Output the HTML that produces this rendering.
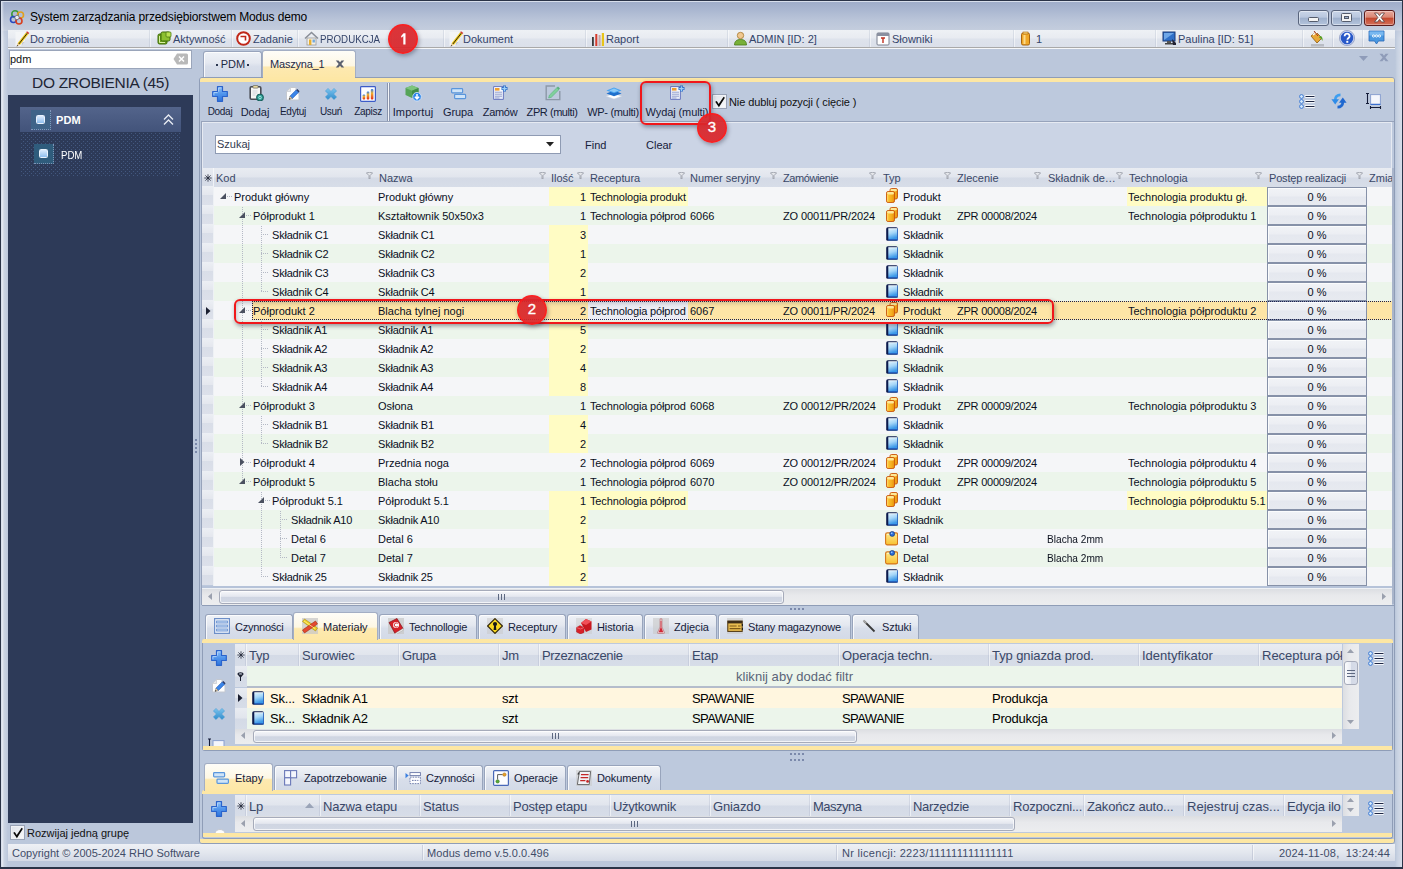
<!DOCTYPE html>
<html><head><meta charset="utf-8"><title>Modus</title><style>
html,body{margin:0;padding:0;}
body{width:1403px;height:869px;overflow:hidden;position:relative;font-family:"Liberation Sans",sans-serif;font-size:11px;background:#bbc7db;}
div,svg{position:absolute;}
.t{white-space:nowrap;color:#000;}
.t13{white-space:nowrap;color:#000;font-size:13px;}
</style></head><body>
<div style="left:0px;top:0px;width:1403px;height:869px;background:#bbc7db;"></div>
<div style="left:0px;top:0px;width:1403px;height:31px;background:linear-gradient(#9dabc8 0,#a9b6d0 30%,#bac5d9 65%,#c5cede 100%);"></div>
<div style="left:2px;top:2px;width:2px;height:865px;background:linear-gradient(90deg,rgba(255,255,255,.45),rgba(255,255,255,0));"></div>
<div style="left:2px;top:24px;width:6px;height:843px;background:linear-gradient(90deg,rgba(255,255,255,.36),rgba(255,255,255,0));-webkit-mask-image:linear-gradient(transparent 0,#000 14px);mask-image:linear-gradient(transparent 0,#000 14px);"></div>
<div style="left:1395px;top:24px;width:7px;height:843px;background:linear-gradient(90deg,rgba(255,255,255,0) 0,rgba(255,255,255,.18) 30%,rgba(255,255,255,.42) 100%);-webkit-mask-image:linear-gradient(transparent 0,#000 14px);mask-image:linear-gradient(transparent 0,#000 14px);"></div>
<div style="left:0px;top:0px;width:1403px;height:869px;border:1px solid #2a3347;box-sizing:border-box;border-bottom:2px solid #2a3347;"></div>
<div style="left:1px;top:1px;width:1401px;height:1px;background:#d8dfec;"></div>
<div style="left:1px;top:1px;width:1px;height:866px;background:#d8dfec;"></div>
<svg style="left:9px;top:9px" width="17" height="17" viewBox="0 0 17 17"><circle cx="6" cy="5" r="3.2" fill="none" stroke="#3a9a3a" stroke-width="1.6"/><circle cx="11.5" cy="6" r="3" fill="none" stroke="#e0a020" stroke-width="1.6"/><circle cx="4.5" cy="10.5" r="3" fill="none" stroke="#2848c0" stroke-width="1.6"/><circle cx="10" cy="12" r="3" fill="none" stroke="#d84020" stroke-width="1.6"/><circle cx="8" cy="8.5" r="2.2" fill="#e8ecf4" stroke="#667" stroke-width=".8"/></svg>
<div class="t" style="left:30px;top:8px;height:18px;line-height:18px;font-size:12px;letter-spacing:-0.15px;color:#000;">System zarządzania przedsiębiorstwem Modus demo</div>
<div style="left:1298px;top:10px;width:31px;height:16px;border:1px solid #59647c;border-radius:3px;box-sizing:border-box;background:linear-gradient(#c9d5e8 0,#b9c7de 45%,#9eb0cc 50%,#b4c4dc 100%);box-shadow:inset 0 0 0 1px rgba(255,255,255,.45);"></div>
<div style="left:1331px;top:10px;width:31px;height:16px;border:1px solid #59647c;border-radius:3px;box-sizing:border-box;background:linear-gradient(#c9d5e8 0,#b9c7de 45%,#9eb0cc 50%,#b4c4dc 100%);box-shadow:inset 0 0 0 1px rgba(255,255,255,.45);"></div>
<div style="left:1364px;top:10px;width:31px;height:16px;border:1px solid #5a1a1a;border-radius:3px;box-sizing:border-box;background:linear-gradient(#e9a99c 0,#d98673 45%,#c4472d 50%,#d4705a 100%);box-shadow:inset 0 0 0 1px rgba(255,255,255,.35);"></div>
<div style="left:1308px;top:17px;width:11px;height:5px;background:#f4f4f4;border:1px solid #555c6c;border-radius:1.5px;box-sizing:border-box;"></div>
<div style="left:1341px;top:13px;width:11px;height:9px;background:#f4f4f4;border:1px solid #555c6c;border-radius:1.5px;box-sizing:border-box;"></div>
<div style="left:1344px;top:16px;width:5px;height:3px;background:#9eb0cc;border:1px solid #555c6c;box-sizing:border-box;"></div>
<svg style="left:1373px;top:12px" width="13" height="11" viewBox="0 0 13 11"><path d="M1.5 1h3l2 2.6 2-2.6h3l-3.4 4.5 3.4 4.5h-3l-2-2.6-2 2.6h-3l3.4-4.5z" fill="#f6f6f6" stroke="#5a4040" stroke-width=".8"/></svg>
<div style="left:8px;top:30px;width:1387px;height:17px;background:linear-gradient(#eef1f5 0,#e8ebf1 48%,#dee3ec 52%,#dbe0ea 100%);"></div>
<div style="left:8px;top:47px;width:1387px;height:1px;background:#a9a9a9;"></div>
<div style="left:8px;top:48px;width:1387px;height:1px;background:#f6f7f9;"></div>
<div style="left:150px;top:30px;width:1px;height:17px;background:rgba(255,255,255,.5);"></div>
<div style="left:149px;top:30px;width:1px;height:17px;background:rgba(160,170,190,.25);"></div>
<div style="left:232px;top:30px;width:1px;height:17px;background:rgba(255,255,255,.5);"></div>
<div style="left:231px;top:30px;width:1px;height:17px;background:rgba(160,170,190,.25);"></div>
<div style="left:298px;top:30px;width:1px;height:17px;background:rgba(255,255,255,.5);"></div>
<div style="left:297px;top:30px;width:1px;height:17px;background:rgba(160,170,190,.25);"></div>
<div style="left:392px;top:30px;width:1px;height:17px;background:rgba(255,255,255,.5);"></div>
<div style="left:391px;top:30px;width:1px;height:17px;background:rgba(160,170,190,.25);"></div>
<div style="left:444px;top:30px;width:1px;height:17px;background:rgba(255,255,255,.5);"></div>
<div style="left:443px;top:30px;width:1px;height:17px;background:rgba(160,170,190,.25);"></div>
<div style="left:586px;top:30px;width:1px;height:17px;background:rgba(255,255,255,.5);"></div>
<div style="left:585px;top:30px;width:1px;height:17px;background:rgba(160,170,190,.25);"></div>
<div style="left:728px;top:30px;width:1px;height:17px;background:rgba(255,255,255,.5);"></div>
<div style="left:727px;top:30px;width:1px;height:17px;background:rgba(160,170,190,.25);"></div>
<div style="left:870px;top:30px;width:1px;height:17px;background:rgba(255,255,255,.5);"></div>
<div style="left:869px;top:30px;width:1px;height:17px;background:rgba(160,170,190,.25);"></div>
<div style="left:1014px;top:30px;width:1px;height:17px;background:rgba(255,255,255,.5);"></div>
<div style="left:1013px;top:30px;width:1px;height:17px;background:rgba(160,170,190,.25);"></div>
<div style="left:1156px;top:30px;width:1px;height:17px;background:rgba(255,255,255,.5);"></div>
<div style="left:1155px;top:30px;width:1px;height:17px;background:rgba(160,170,190,.25);"></div>
<div style="left:1303px;top:30px;width:1px;height:17px;background:rgba(255,255,255,.5);"></div>
<div style="left:1302px;top:30px;width:1px;height:17px;background:rgba(160,170,190,.25);"></div>
<div style="left:1333px;top:30px;width:1px;height:17px;background:rgba(255,255,255,.5);"></div>
<div style="left:1332px;top:30px;width:1px;height:17px;background:rgba(160,170,190,.25);"></div>
<div style="left:1363px;top:30px;width:1px;height:17px;background:rgba(255,255,255,.5);"></div>
<div style="left:1362px;top:30px;width:1px;height:17px;background:rgba(160,170,190,.25);"></div>
<svg style="left:15px;top:31px" width="15" height="16" viewBox="0 0 15 16"><path d="M0.500 1h9.500v9.500L6.500 15H0.500z" fill="#f4f5f7" opacity=".9"/><path d="M10 10.500L6.500 15l.500-3.500z" fill="#c4c8d0"/><path d="M2.600 12.300L11.200 1.300l2.300 1.800L4.900 14.100z" fill="#f0c818"/><path d="M3.700 13.200L12.300 2.200" stroke="#2a2410" stroke-width="1"/><path d="M11.200 1.300l.800-1 2.300 1.800-.800 1z" fill="#d83030"/><path d="M2.600 12.300l2.300 1.800-3.200 1.300z" fill="#e8c890"/><path d="M1.700 15.400l.400-1.400 1 .800z" fill="#222"/></svg>
<div class="t" style="left:30px;top:30px;height:18px;line-height:18px;color:#34446a;letter-spacing:-.25px;">Do zrobienia</div>
<svg style="left:157px;top:31px" width="15" height="15" viewBox="0 0 15 15"><rect x="1" y="3" width="9" height="10" rx="1.5" fill="#6ca018" stroke="#3d6a08" stroke-width="1"/><rect x="4" y="1" width="9" height="9" rx="1.5" fill="#8cc030" stroke="#3d6a08" stroke-width="1"/><rect x="9" y="1" width="5" height="5" rx="1" fill="#b8e050" stroke="#4d7a10" stroke-width=".8"/><path d="M2.5 5v6.5H8" fill="none" stroke="#d8f0a0" stroke-width="1"/></svg>
<div class="t" style="left:173px;top:30px;height:18px;line-height:18px;color:#34446a;">Aktywność</div>
<svg style="left:236px;top:31px" width="15" height="15" viewBox="0 0 15 15"><circle cx="7.5" cy="7.5" r="6.3" fill="#fff" stroke="#c02818" stroke-width="2"/><path d="M4.5 5.5h5v4" fill="none" stroke="#c02818" stroke-width="1.6"/></svg>
<div class="t" style="left:253px;top:30px;height:18px;line-height:18px;color:#34446a;">Zadanie</div>
<svg style="left:304px;top:31px" width="15" height="15" viewBox="0 0 15 15"><path d="M1 7.5L7.5 1.5 14 7.5" fill="none" stroke="#8a8f98" stroke-width="1.6"/><rect x="3" y="7" width="9" height="7" fill="#f4f0e6" stroke="#9a9a9a" stroke-width=".8"/><rect x="5" y="8.5" width="2.4" height="5.5" fill="#e8b030"/><rect x="8.5" y="8.5" width="2.4" height="3" fill="#70a8e0"/></svg>
<div class="t" style="left:320px;top:30px;height:18px;line-height:18px;color:#34446a;transform:scaleX(.885);transform-origin:0 50%;">PRODUKCJA</div>
<svg style="left:449px;top:31px" width="15" height="16" viewBox="0 0 15 16"><path d="M0.500 1h9.500v9.500L6.500 15H0.500z" fill="#f4f5f7" opacity=".9"/><path d="M10 10.500L6.500 15l.500-3.500z" fill="#c4c8d0"/><path d="M2.600 12.300L11.200 1.300l2.300 1.800L4.900 14.100z" fill="#f0c818"/><path d="M3.700 13.200L12.300 2.200" stroke="#2a2410" stroke-width="1"/><path d="M11.200 1.300l.800-1 2.300 1.800-.800 1z" fill="#d83030"/><path d="M2.600 12.300l2.300 1.800-3.200 1.300z" fill="#e8c890"/><path d="M1.700 15.400l.400-1.400 1 .800z" fill="#222"/></svg>
<div class="t" style="left:463px;top:30px;height:18px;line-height:18px;color:#34446a;">Dokument</div>
<svg style="left:591px;top:32px" width="15" height="14" viewBox="0 0 15 14"><rect x="1" y="5" width="1.800" height="9" fill="#3a3a3a"/><rect x="4.300" y="2" width="2" height="12" fill="#d83a2a"/><rect x="7.600" y="3" width="2" height="11" fill="#c8a8a8"/><rect x="10.800" y="1" width="2.200" height="13" fill="#e8c418"/></svg>
<div class="t" style="left:606px;top:30px;height:18px;line-height:18px;color:#34446a;">Raport</div>
<svg style="left:733px;top:31px" width="15" height="15" viewBox="0 0 15 15"><circle cx="7.5" cy="4.5" r="3.2" fill="#f0c890" stroke="#a87830" stroke-width=".8"/><path d="M1.5 14c0-4 2.5-5.5 6-5.5s6 1.5 6 5.5z" fill="#78b038" stroke="#4a7a18" stroke-width=".8"/></svg>
<div class="t" style="left:749px;top:30px;height:18px;line-height:18px;color:#34446a;">ADMIN [ID: 2]</div>
<svg style="left:876px;top:31px" width="14" height="15" viewBox="0 0 14 15"><rect x="1" y="2" width="12" height="12" rx="1" fill="#fff" stroke="#7a8090" stroke-width="1"/><rect x="1" y="2" width="12" height="3" fill="#8a90a0"/><path d="M5 7h4M7 7v5" stroke="#c03020" stroke-width="1.4"/></svg>
<div class="t" style="left:892px;top:30px;height:18px;line-height:18px;color:#34446a;">Słowniki</div>
<svg style="left:1020px;top:31px" width="12" height="15" viewBox="0 0 12 15"><rect x="1.5" y="2" width="8" height="12" rx="1.5" fill="#f0a828" stroke="#a86410" stroke-width="1"/><rect x="3" y="1" width="5" height="2" fill="#f8d070" stroke="#a86410" stroke-width=".6"/><rect x="3.5" y="4" width="2" height="9" fill="#fbd98a"/></svg>
<div class="t" style="left:1036px;top:30px;height:18px;line-height:18px;color:#34446a;">1</div>
<svg style="left:1162px;top:31px" width="15" height="15" viewBox="0 0 15 15"><rect x="1" y="1" width="12" height="9" fill="#3070c8" stroke="#1a3a78" stroke-width="1"/><path d="M2 2h10L2 9z" fill="#70a8e8"/><rect x="5" y="10" width="4" height="2" fill="#555"/><rect x="3" y="12" width="8" height="1.5" fill="#444"/><path d="M10 8l4 4v2h-3z" fill="#223"/></svg>
<div class="t" style="left:1178px;top:30px;height:18px;line-height:18px;color:#34446a;">Paulina [ID: 51]</div>
<svg style="left:1308px;top:30px" width="17" height="17" viewBox="0 0 17 17"><path d="M3 6l5-4 6 6-5 5z" fill="#e8a838" stroke="#8a5a10" stroke-width=".8"/><path d="M5 5l4-3" stroke="#fff" stroke-width="1.2"/><path d="M6 1l4 5" stroke="#a03020" stroke-width="1"/><path d="M12 6c2 0 3 2 2.5 5-1-2-2-3-3.5-3.5z" fill="#58a028"/><rect x="3" y="14" width="13" height="2.5" fill="#b8bcc4"/></svg>
<svg style="left:1339px;top:30px" width="16" height="16" viewBox="0 0 16 16"><circle cx="8" cy="8" r="7" fill="#2858c8" stroke="#c8d4f0" stroke-width="1.4"/><circle cx="8" cy="8" r="7.6" fill="none" stroke="#6878a8" stroke-width=".5"/><path d="M5.6 6.2c0-3.4 5-3.4 5 0 0 1.8-2.2 1.8-2.2 3.6" fill="none" stroke="#fff" stroke-width="1.8"/><rect x="7.3" y="10.8" width="2" height="2" fill="#fff"/></svg>
<svg style="left:1368px;top:30px" width="17" height="16" viewBox="0 0 17 16"><path d="M1 1h15v10h-5.5L8.5 14 6.5 11H1z" fill="#4a98e0" stroke="#2868b8" stroke-width=".8"/><path d="M1.5 1.5h14v4h-14z" fill="#78b8f0"/><g fill="none" stroke="#fff" stroke-width=".9"><circle cx="5.5" cy="6" r="1.1"/><circle cx="8.5" cy="6" r="1.1"/><circle cx="11.5" cy="6" r="1.1"/></g></svg>
<div style="left:388px;top:24px;width:30px;height:30px;border-radius:50%;background:radial-gradient(circle closest-side at 50% 50%,rgba(216,38,44,.93) 0,rgba(218,38,42,.93) 84%,rgba(252,24,24,.96) 93%,rgba(252,24,24,.96) 100%);box-shadow:1px 2px 4px rgba(40,40,60,.4);"></div>
<div class="t" style="left:388px;top:23px;height:30px;line-height:30px;width:30px;text-align:center;color:#fff;font-size:15px;-webkit-text-stroke:.35px #fff;"></div>
<svg style="left:401px;top:33px" width="5" height="12" viewBox="0 0 5 12"><path d="M0 3.300L2.500 0.300H4.500V11.500H2.300V3.100L0.700 4.700z" fill="#fff"/></svg>
<div style="left:9px;top:50px;width:183px;height:19px;background:#fff;border:1px solid #9aa5ba;box-sizing:border-box;"></div>
<div class="t" style="left:10px;top:51px;height:16px;line-height:16px;font-size:11px;color:#111;">pdm</div>
<svg style="left:173px;top:53px" width="15" height="12" viewBox="0 0 15 12"><path d="M4 0.5h9.5a1.5 1.5 0 0 1 1.5 1.5v8a1.5 1.5 0 0 1-1.5 1.5H4L0.5 6z" fill="#b9b9b9"/><path d="M6 3.5l5 5M11 3.5l-5 5" stroke="#fff" stroke-width="1.5"/></svg>
<div class="t" style="left:8px;top:71px;height:24px;line-height:24px;width:185px;text-align:center;font-size:15.5px;letter-spacing:-0.3px;color:#1e2535;">DO ZROBIENIA (45)</div>
<div style="left:8px;top:95px;width:185px;height:728px;background:#2d3a58;"></div>
<div style="left:20px;top:107px;width:161px;height:25px;background:linear-gradient(#53648b,#42537a);"></div>
<div style="left:31px;top:110px;width:20px;height:20px;background:#3f6488;border-right:1px dotted rgba(170,180,215,.65);border-bottom:1px dotted rgba(170,180,215,.65);box-sizing:border-box;"></div>
<div style="left:36px;top:115px;width:9px;height:9px;background:linear-gradient(#dcecfc,#8fbfee);border:1px solid #eaf3fd;border-radius:1.5px;box-sizing:border-box;"></div>
<div class="t" style="left:56px;top:108px;height:24px;line-height:24px;font-weight:bold;color:#fff;font-size:11px;letter-spacing:.1px;">PDM</div>
<svg style="left:163px;top:114px" width="11" height="12" viewBox="0 0 11 12"><path d="M1 5.5L5.5 1 10 5.5M1 10.5L5.5 6 10 10.5" fill="none" stroke="#e8ecf4" stroke-width="1.3"/></svg>
<svg style="left:21px;top:133px" width="160" height="44"><defs><pattern id="pdot" width="4" height="4" patternUnits="userSpaceOnUse"><rect x="0" y="2" width="1" height="1" fill="#43587f"/><rect x="2" y="0" width="1" height="1" fill="#43587f"/></pattern></defs><rect width="160" height="44" fill="url(#pdot)"/></svg>
<div style="left:34px;top:144px;width:20px;height:20px;background:#2f5c7c;border-right:1px dotted rgba(170,180,215,.65);border-bottom:1px dotted rgba(170,180,215,.65);box-sizing:border-box;"></div>
<div style="left:39px;top:149px;width:9px;height:9px;background:linear-gradient(#dcecfc,#8fbfee);border:1px solid #eaf3fd;border-radius:1.5px;box-sizing:border-box;"></div>
<div class="t" style="left:61px;top:146px;height:18px;line-height:18px;color:#fff;transform:scaleX(.875);transform-origin:0 50%;">PDM</div>
<div style="left:10px;top:825px;width:15px;height:15px;background:linear-gradient(135deg,#dfe3ea,#f8f9fb);border:1px solid #98a2b6;box-sizing:border-box;box-shadow:inset 0 0 0 1px #f0f2f6;"></div>
<svg style="left:12px;top:827px" width="12" height="12" viewBox="0 0 12 12"><path d="M1.2 5.8l1.6-.9 1.9 3L9.6 0.8l1.3.9-6 9.6z" fill="#0a0a0a"/></svg>
<div class="t" style="left:27px;top:824px;height:18px;line-height:18px;color:#111;">Rozwijaj jedną grupę</div>
<div style="left:195px;top:439px;width:2px;height:2px;background:#7b89ab;"></div>
<div style="left:195px;top:443px;width:2px;height:2px;background:#7b89ab;"></div>
<div style="left:195px;top:447px;width:2px;height:2px;background:#7b89ab;"></div>
<div style="left:195px;top:451px;width:2px;height:2px;background:#7b89ab;"></div>
<div style="left:8px;top:844px;width:1387px;height:17px;background:linear-gradient(#eef0f5 0,#e3e7ee 50%,#d4dae6 100%);"></div>
<div class="t" style="left:12px;top:844px;height:18px;line-height:18px;color:#3f4c68;">Copyright © 2005-2024 RHO Software</div>
<div class="t" style="left:427px;top:844px;height:18px;line-height:18px;color:#3f4c68;letter-spacing:.08px;">Modus demo v.5.0.0.496</div>
<div class="t" style="left:842px;top:844px;height:18px;line-height:18px;color:#3f4c68;letter-spacing:.3px;">Nr licencji: 2223/111111111111111</div>
<div class="t" style="left:1279px;top:844px;height:18px;line-height:18px;color:#3f4c68;white-space:pre;letter-spacing:.17px;">2024-11-08,  13:24:44</div>
<div style="left:422px;top:845px;width:1px;height:15px;background:rgba(170,178,198,.45);"></div>
<div style="left:423px;top:845px;width:1px;height:15px;background:rgba(255,255,255,.55);"></div>
<div style="left:836px;top:845px;width:1px;height:15px;background:rgba(170,178,198,.45);"></div>
<div style="left:837px;top:845px;width:1px;height:15px;background:rgba(255,255,255,.55);"></div>
<div style="left:1252px;top:845px;width:1px;height:15px;background:rgba(170,178,198,.45);"></div>
<div style="left:1253px;top:845px;width:1px;height:15px;background:rgba(255,255,255,.55);"></div>
<svg width="0" height="0" style="left:0;top:0"><defs>
<linearGradient id="gPlus" x1="0" y1="0" x2="0" y2="1"><stop offset="0" stop-color="#8cc0f8"/><stop offset=".5" stop-color="#4f94ec"/><stop offset="1" stop-color="#2f74dc"/></linearGradient>
<linearGradient id="gX" x1="0" y1="0" x2="0" y2="1"><stop offset="0" stop-color="#7cc4ee"/><stop offset="1" stop-color="#2f8ccc"/></linearGradient>
<linearGradient id="gBook" x1="0" y1="0" x2="0.250" y2="1"><stop offset="0" stop-color="#e2f3fd"/><stop offset=".5" stop-color="#a4d6f8"/><stop offset="1" stop-color="#3a98e8"/></linearGradient>
<linearGradient id="gProd" x1="0" y1="0" x2="1" y2="0"><stop offset="0" stop-color="#fcc838"/><stop offset=".6" stop-color="#f6b020"/><stop offset="1" stop-color="#e8900c"/></linearGradient>
<linearGradient id="gBar" x1="0" y1="0" x2="0" y2="1"><stop offset="0" stop-color="#2f7fe8"/><stop offset=".4" stop-color="#f0b030"/><stop offset="1" stop-color="#e02818"/></linearGradient>
<linearGradient id="gDet" x1="0" y1="0" x2="0" y2="1"><stop offset="0" stop-color="#fdea90"/><stop offset="1" stop-color="#f8c030"/></linearGradient>
<linearGradient id="gDoc" x1="0" y1="0" x2="0" y2="1"><stop offset="0" stop-color="#ffffff"/><stop offset="1" stop-color="#e4e9f6"/></linearGradient>
</defs></svg>
<div style="left:203px;top:51px;width:59px;height:27px;border:1px solid #98a4bc;border-bottom:none;border-radius:3px 3px 0 0;box-sizing:border-box;background:linear-gradient(#eff2f7 0,#e4e8f0 42%,#d8deea 56%,#d3dae7 100%);box-shadow:inset 1px 1px 0 rgba(255,255,255,.8);"></div>
<div class="t" style="left:204px;top:53px;height:23px;line-height:23px;width:58px;text-align:center;color:#1e2a44;">PDM</div>
<div style="left:216px;top:64px;width:2px;height:2px;background:#2a3650;"></div>
<div style="left:247px;top:64px;width:2px;height:2px;background:#2a3650;"></div>
<div style="left:262px;top:50px;width:94px;height:29px;border:1px solid #a3aec4;border-bottom:none;border-radius:3px 3px 0 0;box-sizing:border-box;background:linear-gradient(#fefdf8 0,#fdf7e4 52%,#fde9b0 58%,#fde7a6 100%);"></div>
<div class="t" style="left:270px;top:53px;height:23px;line-height:23px;color:#1e2a44;letter-spacing:-.2px;">Maszyna_1</div>
<svg style="left:335px;top:60px" width="10" height="8" viewBox="0 0 10 8.5"><path d="M0.5 0.5h2.9l1.6 2 1.6-2h2.9L6.4 4.2l3.1 3.8H6.6L5 6 3.4 8H0.5l3.1-3.8z" fill="#5a606e"/></svg>
<svg style="left:1359px;top:56px" width="9" height="5" viewBox="0 0 9 5"><path d="M0 0h9L4.5 5z" fill="#8f9cb9"/></svg>
<svg style="left:1379px;top:53px" width="10" height="9" viewBox="0 0 10 8.5"><path d="M0.5 0.5h2.9l1.6 2 1.6-2h2.9L6.4 4.2l3.1 3.8H6.6L5 6 3.4 8H0.5l3.1-3.8z" fill="#8f9cb9"/></svg>
<div style="left:199px;top:77px;width:1196px;height:767px;border:1px solid #8f9db7;box-sizing:border-box;background:#bdc9dd;border-radius:3px 3px 3px 3px;"></div>
<div style="left:200px;top:78px;width:1194px;height:4px;background:#fde7a4;border-radius:2px 2px 0 0;"></div>
<div style="left:200px;top:839px;width:1194px;height:4px;background:#fde7a4;border-radius:0 0 2px 2px;"></div>
<div style="left:263px;top:77px;width:92px;height:2px;background:#fde7a6;"></div>
<div style="left:201px;top:82px;width:1193px;height:39px;background:#bdc9dd;"></div>
<svg style="left:212px;top:86px" width="16" height="16" viewBox="0 0 16 16"><path d="M5.5 0.7h5v4.8h4.8v5h-4.8v4.8h-5v-4.8H0.7v-5h4.8z" fill="url(#gPlus)" stroke="#2a63cc" stroke-width="1.2" stroke-linejoin="round"/><path d="M6.6 5.6V1.9h2.8M1.9 9.4V6.6h3.7" fill="none" stroke="#b4d6fb" stroke-width=".9"/></svg>
<div class="t" style="left:180px;top:104px;height:16px;line-height:16px;width:80px;text-align:center;color:#16213a;font-size:10px;letter-spacing:-0.3px;">Dodaj</div>
<svg style="left:249px;top:85px" width="15" height="16" viewBox="0 0 15 16"><rect x="1.2" y="1.7" width="10.6" height="12.6" rx="1.2" fill="#f6f6f4" stroke="#4a4d55" stroke-width="1.6"/><rect x="4" y="0.5" width="5" height="2.6" rx=".6" fill="#e8d8a0" stroke="#6a6a60" stroke-width=".7"/><path d="M3.5 6h5M3.5 8h5M3.5 10h3" stroke="#c8ccd4" stroke-width=".8"/><circle cx="11" cy="12.5" r="3.3" fill="#2fa098" stroke="#16605c" stroke-width="1.1"/><circle cx="11" cy="12.5" r="1.3" fill="none" stroke="#b8f0ea" stroke-width=".8"/></svg>
<div class="t" style="left:215px;top:104px;height:16px;line-height:16px;width:80px;text-align:center;color:#16213a;font-size:11px;letter-spacing:0px;">Dodaj</div>
<svg style="left:285px;top:86px" width="16" height="15" viewBox="0 0 16 15"><path d="M1.5 5.5l4-4h5.5v4l3 2v6.5H1.5z" fill="#fdfdfd" stroke="#c4c8d0" stroke-width="1"/><path d="M1.5 5.5h4v-4z" fill="#e4e6ea" stroke="#c4c8d0" stroke-width=".7"/><path d="M5 10.2l6.3-6.3 2.3 2.3-6.3 6.3z" fill="#3a86ea" stroke="#1d57b8" stroke-width=".7"/><path d="M11.3 3.9l1-1 2.3 2.3-1 1z" fill="#2a3a68"/><path d="M5 10.2l2.3 2.3-3.3 1z" fill="#f0d8b0" stroke="#555" stroke-width=".4"/><path d="M4 13.5l.5-1.6 1.1 1.1z" fill="#222"/></svg>
<div class="t" style="left:253px;top:104px;height:16px;line-height:16px;width:80px;text-align:center;color:#16213a;font-size:10px;letter-spacing:-0.3px;">Edytuj</div>
<svg style="left:325px;top:88px" width="12" height="12" viewBox="0 0 12 12"><path d="M3 0.400L6 3.400 9 0.400l2.600 2.600L8.600 6l3 3L9 11.600 6 8.600 3 11.600 0.400 9l3-3-3-3z" fill="url(#gX)" stroke="#3f9ad6" stroke-width=".5"/></svg>
<div class="t" style="left:291px;top:104px;height:16px;line-height:16px;width:80px;text-align:center;color:#16213a;font-size:10px;letter-spacing:-0.3px;">Usuń</div>
<svg style="left:360px;top:86px" width="16" height="16" viewBox="0 0 16 16"><rect x="0.6" y="0.6" width="14.8" height="14.8" rx=".8" fill="#fdfdff" stroke="#3c5cc8" stroke-width="1.2"/><rect x="2.6" y="8.5" width="2.6" height="5" rx="1" fill="url(#gBar)"/><rect x="6.7" y="5.5" width="2.6" height="8" rx="1" fill="url(#gBar)"/><rect x="10.8" y="3" width="2.6" height="10.5" rx="1" fill="url(#gBar)"/></svg>
<div class="t" style="left:328px;top:104px;height:16px;line-height:16px;width:80px;text-align:center;color:#16213a;font-size:10px;letter-spacing:-0.3px;">Zapisz</div>
<div style="left:387px;top:83px;width:1px;height:38px;background:#8a95ad;"></div>
<div style="left:388px;top:83px;width:1px;height:38px;background:#f4f6fa;"></div>
<div style="left:389px;top:83px;width:1px;height:38px;background:#8a95ad;"></div>
<svg style="left:405px;top:85px" width="17" height="17" viewBox="0 0 17 17"><path d="M7 0.5l6.5 2.6v7L7 13 0.5 10.1v-7z" fill="#56a458"/><path d="M7 0.5l6.5 2.6L7 5.8 0.5 3.1z" fill="#7cc47c"/><path d="M7 5.8l6.5-2.7v7L7 13z" fill="#3f8c48"/><circle cx="12" cy="11.7" r="4.3" fill="#2f86ea" stroke="#d8e8fc" stroke-width=".8"/><path d="M12 9v4.6M9.9 11.8l2.1 2.1 2.1-2.1" stroke="#fff" stroke-width="1.5" fill="none"/></svg>
<div class="t" style="left:373px;top:104px;height:16px;line-height:16px;width:80px;text-align:center;color:#16213a;font-size:11px;letter-spacing:0.1px;">Importuj</div>
<svg style="left:451px;top:88px" width="16" height="12" viewBox="0 0 16 12"><rect x="0.6" y="0.6" width="11" height="4.2" rx=".8" fill="#cfe4f8" stroke="#5a96dc" stroke-width="1.2"/><rect x="3.6" y="6.4" width="11" height="4.2" rx=".8" fill="#cfe4f8" stroke="#5a96dc" stroke-width="1.2"/></svg>
<div class="t" style="left:418px;top:104px;height:16px;line-height:16px;width:80px;text-align:center;color:#16213a;font-size:11px;letter-spacing:-0.15px;">Grupa</div>
<svg style="left:493px;top:85px" width="16" height="15" viewBox="0 0 16 15"><path d="M0.6 1.6h9.8v12.8H0.6z" fill="url(#gDoc)" stroke="#6a78c0" stroke-width="1"/><rect x="2" y="3" width="4.5" height="2.6" fill="#f0a030"/><path d="M2 7.2h7M2 9.2h7M2 11.2h7M2 13h4.5" stroke="#8a96c8" stroke-width=".9"/><rect x="8" y="0" width="7" height="7" fill="#bcc8dc" opacity=".0"/><path d="M11.5 0.6v6M8.5 3.6h6" stroke="#2f6fc8" stroke-width="3"/><path d="M11.5 1.3v4.6M9.2 3.6h4.6" stroke="#9fd0f8" stroke-width="1.4"/></svg>
<div class="t" style="left:460px;top:104px;height:16px;line-height:16px;width:80px;text-align:center;color:#16213a;font-size:11px;letter-spacing:-0.3px;">Zamów</div>
<svg style="left:545px;top:85px" width="16" height="16" viewBox="0 0 16 16"><path d="M10 1H1.2v13.6h13.6V6" fill="none" stroke="#8c98a8" stroke-width="1.4"/><path d="M4.4 10.2l7.4-7.4 2 2-7.4 7.4-2.8.8z" fill="#7fd09c" stroke="#58b07c" stroke-width=".6"/><path d="M11.8 2.8l1.2-1.2 2 2-1.2 1.2z" fill="#58b07c"/></svg>
<div class="t" style="left:512px;top:104px;height:16px;line-height:16px;width:80px;text-align:center;color:#16213a;font-size:11px;letter-spacing:-0.44px;">ZPR (multi)</div>
<svg style="left:606px;top:87px" width="16" height="13" viewBox="0 0 16 13"><path d="M8 6.5l7.6 2.7L8 12 0.4 9.2z" fill="#fff" stroke="#d0d8e4" stroke-width=".5"/><path d="M8 3.6l7.6 2.8L8 9.2 0.4 6.4z" fill="#1f70cc"/><path d="M8 0.6l7.6 2.8L8 6.2 0.4 3.4z" fill="#4aa4f0"/><path d="M8 1.6l4.8 1.8L8 5.2 3.2 3.4z" fill="#8ccaf8"/></svg>
<div class="t" style="left:573px;top:104px;height:16px;line-height:16px;width:80px;text-align:center;color:#16213a;font-size:11px;letter-spacing:-0.3px;">WP- (multi)</div>
<svg style="left:670px;top:85px" width="16" height="15" viewBox="0 0 16 15"><path d="M0.6 1.6h9.8v12.8H0.6z" fill="url(#gDoc)" stroke="#6a78c0" stroke-width="1"/><rect x="2" y="3" width="4.5" height="2.6" fill="#f0a030"/><path d="M2 7.2h7M2 9.2h7M2 11.2h7M2 13h4.5" stroke="#8a96c8" stroke-width=".9"/><rect x="8" y="0" width="7" height="7" fill="#bcc8dc" opacity=".0"/><path d="M11.5 0.6v6M8.5 3.6h6" stroke="#2f6fc8" stroke-width="3"/><path d="M11.5 1.3v4.6M9.2 3.6h4.6" stroke="#9fd0f8" stroke-width="1.4"/></svg>
<div class="t" style="left:637px;top:104px;height:16px;line-height:16px;width:80px;text-align:center;color:#16213a;font-size:11px;letter-spacing:-0.1px;">Wydaj (multi)</div>
<div style="left:712px;top:94px;width:15px;height:15px;background:linear-gradient(135deg,#dde1e8,#fafbfc);border:1px solid #98a2b6;box-sizing:border-box;box-shadow:inset 0 0 0 1px #f0f2f6;"></div>
<svg style="left:714px;top:96px" width="12" height="12" viewBox="0 0 12 12"><path d="M1.2 5.8l1.6-.9 1.9 3L9.6 0.8l1.3.9-6 9.6z" fill="#0a0a0a"/></svg>
<div class="t" style="left:729px;top:93px;height:18px;line-height:18px;color:#111;letter-spacing:-.1px;">Nie dubluj pozycji ( cięcie )</div>
<svg style="left:1299px;top:94px" width="16" height="15" viewBox="0 0 16 15"><g stroke="#f4f7fb" stroke-width="2.800" stroke-linecap="round"><path d="M7 2.500h8M7 7.500h8M7 12.500h8"/></g><g stroke="#1e2744" stroke-width="1.200"><path d="M6.500 2.500h9M6.500 7.500h9M6.500 12.500h9"/></g><g fill="#d8ecfd" stroke="#2f6fd0" stroke-width=".9"><circle cx="2.500" cy="2.500" r="1.900"/><circle cx="2.500" cy="7.500" r="1.900"/><circle cx="2.500" cy="12.500" r="1.900"/></g></svg>
<svg style="left:1331px;top:93px" width="16" height="16" viewBox="0 0 16 16"><path d="M9.500 1.800C6.200 1.800 4.200 4 4.200 7" stroke="#3f9ff0" stroke-width="2.800" fill="none"/><path d="M0.400 6.200h7.600L4.200 11.600z" fill="#2f8ce8"/><path d="M6.500 14.200c3.300 0 5.300-2.200 5.300-5.200" stroke="#1f68d0" stroke-width="2.800" fill="none"/><path d="M8 9.800h7.600L11.800 4.400z" fill="#1f68d0"/></svg>
<svg style="left:1366px;top:93px" width="16" height="17" viewBox="0 0 16 17"><path d="M1.5 0.5v10M0 0.5h3M0 10.5h3" stroke="#141c38" stroke-width="1.1"/><rect x="4.6" y="1.6" width="9.8" height="9.8" fill="#f4f6fc" stroke="#8aa0d0" stroke-width="1"/><path d="M4.6 11.4h9.8" stroke="#3a6fd0" stroke-width="1.2"/><path d="M4.5 14.5h10M4.5 13v3M14.5 13v3" stroke="#141c38" stroke-width="1.1"/></svg>
<div style="left:201px;top:121px;width:1193px;height:1px;background:#97a3bb;"></div>
<div style="left:202px;top:122px;width:1190px;height:46px;background:#cbd4e5;border-top:1px solid #e6eaf2;border-left:1px solid #e6eaf2;border-right:1px solid #e6eaf2;box-sizing:border-box;"></div>
<div style="left:215px;top:135px;width:346px;height:19px;background:#fff;border:1px solid #8f9bb3;box-sizing:border-box;"></div>
<div class="t" style="left:217px;top:135px;height:18px;line-height:18px;color:#333c50;">Szukaj</div>
<svg style="left:546px;top:142px" width="9" height="5" viewBox="0 0 9 5"><path d="M0 0h8L4 4.5z" fill="#222"/></svg>
<div class="t" style="left:585px;top:136px;height:18px;line-height:18px;color:#16213a;">Find</div>
<div class="t" style="left:646px;top:136px;height:18px;line-height:18px;color:#16213a;">Clear</div>
<div style="left:640px;top:81px;width:71px;height:44px;border:2px solid #f0161a;border-radius:6px;box-sizing:border-box;box-shadow:1px 2px 4px rgba(40,40,60,.45),inset 1px 2px 4px rgba(40,40,60,.25);"></div>
<div style="left:697px;top:113px;width:30px;height:30px;border-radius:50%;background:radial-gradient(circle closest-side at 50% 50%,rgba(216,38,44,.93) 0,rgba(218,38,42,.93) 84%,rgba(252,24,24,.96) 93%,rgba(252,24,24,.96) 100%);box-shadow:1px 2px 4px rgba(40,40,60,.4);"></div>
<div class="t" style="left:697px;top:112px;height:30px;line-height:30px;width:30px;text-align:center;color:#fff;font-size:15px;-webkit-text-stroke:.35px #fff;">3</div>
<div style="left:202px;top:168px;width:1190px;height:19px;background:linear-gradient(#e9ecf2 0,#e1e5ed 48%,#d4dae6 52%,#d7dde8 100%);"></div>
<svg style="left:204px;top:174px" width="8" height="8" viewBox="0 0 8 8"><path d="M4 0.300v7.400M0.300 4h7.400M1.400 1.400l5.200 5.200M6.600 1.400L1.400 6.600" stroke="#1a1f30" stroke-width=".75"/></svg>
<div class="t" style="left:216px;top:169px;height:18px;line-height:18px;color:#3a4868;letter-spacing:0px;">Kod</div>
<svg style="left:366px;top:172px" width="7" height="7" viewBox="0 0 7 7"><path d="M0.400 0.900Q3.500 -0.300 6.600 0.900L4 3.600V7H3V3.600z" fill="#e4e6ea" stroke="#8c919c" stroke-width=".7"/></svg>
<div class="t" style="left:379px;top:169px;height:18px;line-height:18px;color:#3a4868;letter-spacing:0px;">Nazwa</div>
<svg style="left:539px;top:172px" width="7" height="7" viewBox="0 0 7 7"><path d="M0.400 0.900Q3.500 -0.300 6.600 0.900L4 3.600V7H3V3.600z" fill="#e4e6ea" stroke="#8c919c" stroke-width=".7"/></svg>
<div class="t" style="left:551px;top:169px;height:18px;line-height:18px;color:#3a4868;letter-spacing:0px;">Ilość</div>
<svg style="left:577px;top:172px" width="7" height="7" viewBox="0 0 7 7"><path d="M0.400 0.900Q3.500 -0.300 6.600 0.900L4 3.600V7H3V3.600z" fill="#e4e6ea" stroke="#8c919c" stroke-width=".7"/></svg>
<div class="t" style="left:590px;top:169px;height:18px;line-height:18px;color:#3a4868;letter-spacing:-0.08px;">Receptura</div>
<svg style="left:678px;top:172px" width="7" height="7" viewBox="0 0 7 7"><path d="M0.400 0.900Q3.500 -0.300 6.600 0.900L4 3.600V7H3V3.600z" fill="#e4e6ea" stroke="#8c919c" stroke-width=".7"/></svg>
<div class="t" style="left:690px;top:169px;height:18px;line-height:18px;color:#3a4868;letter-spacing:-0.06px;">Numer seryjny</div>
<svg style="left:770px;top:172px" width="7" height="7" viewBox="0 0 7 7"><path d="M0.400 0.900Q3.500 -0.300 6.600 0.900L4 3.600V7H3V3.600z" fill="#e4e6ea" stroke="#8c919c" stroke-width=".7"/></svg>
<div class="t" style="left:783px;top:169px;height:18px;line-height:18px;color:#3a4868;letter-spacing:-0.4px;">Zamówienie</div>
<svg style="left:869px;top:172px" width="7" height="7" viewBox="0 0 7 7"><path d="M0.400 0.900Q3.500 -0.300 6.600 0.900L4 3.600V7H3V3.600z" fill="#e4e6ea" stroke="#8c919c" stroke-width=".7"/></svg>
<div class="t" style="left:883px;top:169px;height:18px;line-height:18px;color:#3a4868;letter-spacing:0px;">Typ</div>
<svg style="left:944px;top:172px" width="7" height="7" viewBox="0 0 7 7"><path d="M0.400 0.900Q3.500 -0.300 6.600 0.900L4 3.600V7H3V3.600z" fill="#e4e6ea" stroke="#8c919c" stroke-width=".7"/></svg>
<div class="t" style="left:957px;top:169px;height:18px;line-height:18px;color:#3a4868;letter-spacing:0px;">Zlecenie</div>
<svg style="left:1034px;top:172px" width="7" height="7" viewBox="0 0 7 7"><path d="M0.400 0.900Q3.500 -0.300 6.600 0.900L4 3.600V7H3V3.600z" fill="#e4e6ea" stroke="#8c919c" stroke-width=".7"/></svg>
<div class="t" style="left:1048px;top:169px;height:18px;line-height:18px;color:#3a4868;letter-spacing:0px;">Składnik de…</div>
<svg style="left:1116px;top:172px" width="7" height="7" viewBox="0 0 7 7"><path d="M0.400 0.900Q3.500 -0.300 6.600 0.900L4 3.600V7H3V3.600z" fill="#e4e6ea" stroke="#8c919c" stroke-width=".7"/></svg>
<div class="t" style="left:1129px;top:169px;height:18px;line-height:18px;color:#3a4868;letter-spacing:0px;">Technologia</div>
<svg style="left:1255px;top:172px" width="7" height="7" viewBox="0 0 7 7"><path d="M0.400 0.900Q3.500 -0.300 6.600 0.900L4 3.600V7H3V3.600z" fill="#e4e6ea" stroke="#8c919c" stroke-width=".7"/></svg>
<div class="t" style="left:1269px;top:169px;height:18px;line-height:18px;color:#3a4868;letter-spacing:-0.18px;">Postęp realizacji</div>
<svg style="left:1356px;top:172px" width="7" height="7" viewBox="0 0 7 7"><path d="M0.400 0.900Q3.500 -0.300 6.600 0.900L4 3.600V7H3V3.600z" fill="#e4e6ea" stroke="#8c919c" stroke-width=".7"/></svg>
<div class="t" style="left:1369px;top:169px;height:18px;line-height:18px;color:#3a4868;letter-spacing:0px;">Zmia</div>
<div style="left:213px;top:168px;width:1px;height:19px;background:rgba(255,255,255,.6);"></div>
<div style="left:1392px;top:168px;width:2px;height:436px;background:#a9b5cb;"></div>
<div style="left:201px;top:122px;width:1px;height:483px;background:#97a3bb;"></div>
<div style="left:202px;top:186px;width:11px;height:19px;background:linear-gradient(#eceff4 0,#e4e7ee 46%,#d9dee8 50%,#dce0ea 100%);"></div>
<div style="left:213px;top:187px;width:1px;height:19px;background:#eef1f5;"></div>
<div style="left:214px;top:187px;width:1178px;height:19px;background:#f5f6f8;"></div>
<div style="left:549px;top:187px;width:39px;height:19px;background:#fffcc4;"></div>
<div style="left:588px;top:187px;width:100px;height:19px;background:#fffcc4;"></div>
<div style="left:1127px;top:187px;width:140px;height:19px;background:#fffcc4;"></div>
<div class="t" style="left:234px;top:188px;height:19px;line-height:19px;color:#0a0f1c;">Produkt główny</div>
<div class="t" style="left:378px;top:188px;height:19px;line-height:19px;color:#0a0f1c;">Produkt główny</div>
<div class="t" style="left:549px;top:188px;height:19px;line-height:19px;color:#0a0f1c;width:37px;text-align:right;">1</div>
<div class="t" style="left:590px;top:188px;height:19px;line-height:19px;color:#0a0f1c;width:98px;overflow:hidden;letter-spacing:-.14px;">Technologia produkt</div>
<svg style="left:886px;top:188px" width="12" height="15" viewBox="0 0 12 15"><rect x="4" y="0.500" width="7.500" height="10.500" rx="1.600" fill="url(#gProd)" stroke="#c8540c" stroke-width=".9"/><rect x="4.600" y="1" width="6.300" height="2.300" rx="1" fill="#fde898"/><rect x="0.500" y="3.500" width="8" height="11" rx="1.600" fill="url(#gProd)" stroke="#c8540c" stroke-width=".9"/><rect x="1.100" y="4" width="6.800" height="2.600" rx="1" fill="#fde898"/><path d="M1.700 7v6.500" stroke="#fdd868" stroke-width="1"/></svg>
<div class="t" style="left:903px;top:188px;height:19px;line-height:19px;color:#0a0f1c;">Produkt</div>
<div class="t" style="left:1128px;top:188px;height:19px;line-height:19px;color:#0a0f1c;width:139px;overflow:hidden;">Technologia produktu gł.</div>
<div style="left:1267px;top:187px;width:100px;height:19px;box-sizing:border-box;border:1px solid #8691a8;background:linear-gradient(#f1f3f7 0,#eceef3 48%,#e5e8ef 52%,#e7eaf0 100%);box-shadow:inset 1px 1px 0 #fbfcfd;"></div>
<div class="t" style="left:1267px;top:188px;height:19px;line-height:19px;color:#0a0f1c;width:100px;text-align:center;">0 %</div>
<div style="left:202px;top:205px;width:11px;height:19px;background:linear-gradient(#eceff4 0,#e4e7ee 46%,#d9dee8 50%,#dce0ea 100%);"></div>
<div style="left:213px;top:206px;width:1px;height:19px;background:#eef1f5;"></div>
<div style="left:214px;top:206px;width:1178px;height:19px;background:#ecf5eb;"></div>
<div class="t" style="left:253px;top:207px;height:19px;line-height:19px;color:#0a0f1c;">Półprodukt 1</div>
<div class="t" style="left:378px;top:207px;height:19px;line-height:19px;color:#0a0f1c;">Kształtownik 50x50x3</div>
<div class="t" style="left:549px;top:207px;height:19px;line-height:19px;color:#0a0f1c;width:37px;text-align:right;">1</div>
<div class="t" style="left:590px;top:207px;height:19px;line-height:19px;color:#0a0f1c;width:98px;overflow:hidden;letter-spacing:-.14px;">Technologia półprod</div>
<div class="t" style="left:690px;top:207px;height:19px;line-height:19px;color:#0a0f1c;">6066</div>
<div class="t" style="left:783px;top:207px;height:19px;line-height:19px;color:#0a0f1c;letter-spacing:-.12px;">ZO 00011/PR/2024</div>
<svg style="left:886px;top:207px" width="12" height="15" viewBox="0 0 12 15"><rect x="4" y="0.500" width="7.500" height="10.500" rx="1.600" fill="url(#gProd)" stroke="#c8540c" stroke-width=".9"/><rect x="4.600" y="1" width="6.300" height="2.300" rx="1" fill="#fde898"/><rect x="0.500" y="3.500" width="8" height="11" rx="1.600" fill="url(#gProd)" stroke="#c8540c" stroke-width=".9"/><rect x="1.100" y="4" width="6.800" height="2.600" rx="1" fill="#fde898"/><path d="M1.700 7v6.500" stroke="#fdd868" stroke-width="1"/></svg>
<div class="t" style="left:903px;top:207px;height:19px;line-height:19px;color:#0a0f1c;">Produkt</div>
<div class="t" style="left:957px;top:207px;height:19px;line-height:19px;color:#0a0f1c;letter-spacing:-.23px;">ZPR 00008/2024</div>
<div class="t" style="left:1128px;top:207px;height:19px;line-height:19px;color:#0a0f1c;width:139px;overflow:hidden;">Technologia półproduktu 1</div>
<div style="left:1267px;top:206px;width:100px;height:19px;box-sizing:border-box;border:1px solid #8691a8;background:linear-gradient(#f1f3f7 0,#eceef3 48%,#e5e8ef 52%,#e7eaf0 100%);box-shadow:inset 1px 1px 0 #fbfcfd;"></div>
<div class="t" style="left:1267px;top:207px;height:19px;line-height:19px;color:#0a0f1c;width:100px;text-align:center;">0 %</div>
<div style="left:202px;top:224px;width:11px;height:19px;background:linear-gradient(#eceff4 0,#e4e7ee 46%,#d9dee8 50%,#dce0ea 100%);"></div>
<div style="left:213px;top:225px;width:1px;height:19px;background:#eef1f5;"></div>
<div style="left:214px;top:225px;width:1178px;height:19px;background:#f5f6f8;"></div>
<div style="left:549px;top:225px;width:39px;height:19px;background:#fffcc4;"></div>
<div class="t" style="left:272px;top:226px;height:19px;line-height:19px;color:#0a0f1c;letter-spacing:-.2px;">Składnik C1</div>
<div class="t" style="left:378px;top:226px;height:19px;line-height:19px;color:#0a0f1c;letter-spacing:-.2px;">Składnik C1</div>
<div class="t" style="left:549px;top:226px;height:19px;line-height:19px;color:#0a0f1c;width:37px;text-align:right;">3</div>
<svg style="left:886px;top:227px" width="12" height="14" viewBox="0 0 12 14"><rect x="0.200" y="0.300" width="11.600" height="13.500" rx="1.600" fill="#0c1a4c"/><rect x="2.300" y="1.400" width="9.100" height="10.900" rx=".5" fill="url(#gBook)"/><rect x="2.300" y="12.200" width="9.300" height="1.200" fill="#2a6cd0"/><path d="M11.500 1.400v12" stroke="#2a6cd0" stroke-width=".7"/><path d="M2.300 1.700h9" stroke="#f4fbff" stroke-width=".7"/></svg>
<div class="t" style="left:903px;top:226px;height:19px;line-height:19px;color:#0a0f1c;letter-spacing:-.2px;">Składnik</div>
<div style="left:1267px;top:225px;width:100px;height:19px;box-sizing:border-box;border:1px solid #8691a8;background:linear-gradient(#f1f3f7 0,#eceef3 48%,#e5e8ef 52%,#e7eaf0 100%);box-shadow:inset 1px 1px 0 #fbfcfd;"></div>
<div class="t" style="left:1267px;top:226px;height:19px;line-height:19px;color:#0a0f1c;width:100px;text-align:center;">0 %</div>
<div style="left:202px;top:243px;width:11px;height:19px;background:linear-gradient(#eceff4 0,#e4e7ee 46%,#d9dee8 50%,#dce0ea 100%);"></div>
<div style="left:213px;top:244px;width:1px;height:19px;background:#eef1f5;"></div>
<div style="left:214px;top:244px;width:1178px;height:19px;background:#ecf5eb;"></div>
<div style="left:549px;top:244px;width:39px;height:19px;background:#fffcc4;"></div>
<div class="t" style="left:272px;top:245px;height:19px;line-height:19px;color:#0a0f1c;letter-spacing:-.2px;">Składnik C2</div>
<div class="t" style="left:378px;top:245px;height:19px;line-height:19px;color:#0a0f1c;letter-spacing:-.2px;">Składnik C2</div>
<div class="t" style="left:549px;top:245px;height:19px;line-height:19px;color:#0a0f1c;width:37px;text-align:right;">1</div>
<svg style="left:886px;top:246px" width="12" height="14" viewBox="0 0 12 14"><rect x="0.200" y="0.300" width="11.600" height="13.500" rx="1.600" fill="#0c1a4c"/><rect x="2.300" y="1.400" width="9.100" height="10.900" rx=".5" fill="url(#gBook)"/><rect x="2.300" y="12.200" width="9.300" height="1.200" fill="#2a6cd0"/><path d="M11.500 1.400v12" stroke="#2a6cd0" stroke-width=".7"/><path d="M2.300 1.700h9" stroke="#f4fbff" stroke-width=".7"/></svg>
<div class="t" style="left:903px;top:245px;height:19px;line-height:19px;color:#0a0f1c;letter-spacing:-.2px;">Składnik</div>
<div style="left:1267px;top:244px;width:100px;height:19px;box-sizing:border-box;border:1px solid #8691a8;background:linear-gradient(#f1f3f7 0,#eceef3 48%,#e5e8ef 52%,#e7eaf0 100%);box-shadow:inset 1px 1px 0 #fbfcfd;"></div>
<div class="t" style="left:1267px;top:245px;height:19px;line-height:19px;color:#0a0f1c;width:100px;text-align:center;">0 %</div>
<div style="left:202px;top:262px;width:11px;height:19px;background:linear-gradient(#eceff4 0,#e4e7ee 46%,#d9dee8 50%,#dce0ea 100%);"></div>
<div style="left:213px;top:263px;width:1px;height:19px;background:#eef1f5;"></div>
<div style="left:214px;top:263px;width:1178px;height:19px;background:#f5f6f8;"></div>
<div style="left:549px;top:263px;width:39px;height:19px;background:#fffcc4;"></div>
<div class="t" style="left:272px;top:264px;height:19px;line-height:19px;color:#0a0f1c;letter-spacing:-.2px;">Składnik C3</div>
<div class="t" style="left:378px;top:264px;height:19px;line-height:19px;color:#0a0f1c;letter-spacing:-.2px;">Składnik C3</div>
<div class="t" style="left:549px;top:264px;height:19px;line-height:19px;color:#0a0f1c;width:37px;text-align:right;">2</div>
<svg style="left:886px;top:265px" width="12" height="14" viewBox="0 0 12 14"><rect x="0.200" y="0.300" width="11.600" height="13.500" rx="1.600" fill="#0c1a4c"/><rect x="2.300" y="1.400" width="9.100" height="10.900" rx=".5" fill="url(#gBook)"/><rect x="2.300" y="12.200" width="9.300" height="1.200" fill="#2a6cd0"/><path d="M11.500 1.400v12" stroke="#2a6cd0" stroke-width=".7"/><path d="M2.300 1.700h9" stroke="#f4fbff" stroke-width=".7"/></svg>
<div class="t" style="left:903px;top:264px;height:19px;line-height:19px;color:#0a0f1c;letter-spacing:-.2px;">Składnik</div>
<div style="left:1267px;top:263px;width:100px;height:19px;box-sizing:border-box;border:1px solid #8691a8;background:linear-gradient(#f1f3f7 0,#eceef3 48%,#e5e8ef 52%,#e7eaf0 100%);box-shadow:inset 1px 1px 0 #fbfcfd;"></div>
<div class="t" style="left:1267px;top:264px;height:19px;line-height:19px;color:#0a0f1c;width:100px;text-align:center;">0 %</div>
<div style="left:202px;top:281px;width:11px;height:19px;background:linear-gradient(#eceff4 0,#e4e7ee 46%,#d9dee8 50%,#dce0ea 100%);"></div>
<div style="left:213px;top:282px;width:1px;height:19px;background:#eef1f5;"></div>
<div style="left:214px;top:282px;width:1178px;height:19px;background:#ecf5eb;"></div>
<div style="left:549px;top:282px;width:39px;height:19px;background:#fffcc4;"></div>
<div class="t" style="left:272px;top:283px;height:19px;line-height:19px;color:#0a0f1c;letter-spacing:-.2px;">Składnik C4</div>
<div class="t" style="left:378px;top:283px;height:19px;line-height:19px;color:#0a0f1c;letter-spacing:-.2px;">Składnik C4</div>
<div class="t" style="left:549px;top:283px;height:19px;line-height:19px;color:#0a0f1c;width:37px;text-align:right;">1</div>
<svg style="left:886px;top:284px" width="12" height="14" viewBox="0 0 12 14"><rect x="0.200" y="0.300" width="11.600" height="13.500" rx="1.600" fill="#0c1a4c"/><rect x="2.300" y="1.400" width="9.100" height="10.900" rx=".5" fill="url(#gBook)"/><rect x="2.300" y="12.200" width="9.300" height="1.200" fill="#2a6cd0"/><path d="M11.500 1.400v12" stroke="#2a6cd0" stroke-width=".7"/><path d="M2.300 1.700h9" stroke="#f4fbff" stroke-width=".7"/></svg>
<div class="t" style="left:903px;top:283px;height:19px;line-height:19px;color:#0a0f1c;letter-spacing:-.2px;">Składnik</div>
<div style="left:1267px;top:282px;width:100px;height:19px;box-sizing:border-box;border:1px solid #8691a8;background:linear-gradient(#f1f3f7 0,#eceef3 48%,#e5e8ef 52%,#e7eaf0 100%);box-shadow:inset 1px 1px 0 #fbfcfd;"></div>
<div class="t" style="left:1267px;top:283px;height:19px;line-height:19px;color:#0a0f1c;width:100px;text-align:center;">0 %</div>
<div style="left:202px;top:300px;width:11px;height:19px;background:linear-gradient(#eceff4 0,#e4e7ee 46%,#d9dee8 50%,#dce0ea 100%);"></div>
<div style="left:213px;top:301px;width:1px;height:19px;background:#eef1f5;"></div>
<div style="left:214px;top:301px;width:1178px;height:19px;background:#f5f6f8;"></div>
<div style="left:252px;top:301px;width:1140px;height:19px;background:#fde5a6;"></div>
<div style="left:588px;top:301px;width:100px;height:19px;background:#ececf3;"></div>
<div class="t" style="left:253px;top:302px;height:19px;line-height:19px;color:#0a0f1c;">Półprodukt 2</div>
<div class="t" style="left:378px;top:302px;height:19px;line-height:19px;color:#0a0f1c;">Blacha tylnej nogi</div>
<div class="t" style="left:549px;top:302px;height:19px;line-height:19px;color:#0a0f1c;width:37px;text-align:right;">2</div>
<div class="t" style="left:590px;top:302px;height:19px;line-height:19px;color:#0a0f1c;width:98px;overflow:hidden;letter-spacing:-.14px;">Technologia półprod</div>
<div class="t" style="left:690px;top:302px;height:19px;line-height:19px;color:#0a0f1c;">6067</div>
<div class="t" style="left:783px;top:302px;height:19px;line-height:19px;color:#0a0f1c;letter-spacing:-.12px;">ZO 00011/PR/2024</div>
<svg style="left:886px;top:302px" width="12" height="15" viewBox="0 0 12 15"><rect x="4" y="0.500" width="7.500" height="10.500" rx="1.600" fill="url(#gProd)" stroke="#c8540c" stroke-width=".9"/><rect x="4.600" y="1" width="6.300" height="2.300" rx="1" fill="#fde898"/><rect x="0.500" y="3.500" width="8" height="11" rx="1.600" fill="url(#gProd)" stroke="#c8540c" stroke-width=".9"/><rect x="1.100" y="4" width="6.800" height="2.600" rx="1" fill="#fde898"/><path d="M1.700 7v6.500" stroke="#fdd868" stroke-width="1"/></svg>
<div class="t" style="left:903px;top:302px;height:19px;line-height:19px;color:#0a0f1c;">Produkt</div>
<div class="t" style="left:957px;top:302px;height:19px;line-height:19px;color:#0a0f1c;letter-spacing:-.23px;">ZPR 00008/2024</div>
<div class="t" style="left:1128px;top:302px;height:19px;line-height:19px;color:#0a0f1c;width:139px;overflow:hidden;">Technologia półproduktu 2</div>
<div style="left:1267px;top:301px;width:100px;height:19px;box-sizing:border-box;border:1px solid #8691a8;background:linear-gradient(#f1f3f7 0,#eceef3 48%,#e5e8ef 52%,#e7eaf0 100%);box-shadow:inset 1px 1px 0 #fbfcfd;"></div>
<div class="t" style="left:1267px;top:302px;height:19px;line-height:19px;color:#0a0f1c;width:100px;text-align:center;">0 %</div>
<div style="left:202px;top:319px;width:11px;height:19px;background:linear-gradient(#eceff4 0,#e4e7ee 46%,#d9dee8 50%,#dce0ea 100%);"></div>
<div style="left:213px;top:320px;width:1px;height:19px;background:#eef1f5;"></div>
<div style="left:214px;top:320px;width:1178px;height:19px;background:#ecf5eb;"></div>
<div style="left:549px;top:320px;width:39px;height:19px;background:#fffcc4;"></div>
<div class="t" style="left:272px;top:321px;height:19px;line-height:19px;color:#0a0f1c;letter-spacing:-.2px;">Składnik A1</div>
<div class="t" style="left:378px;top:321px;height:19px;line-height:19px;color:#0a0f1c;letter-spacing:-.2px;">Składnik A1</div>
<div class="t" style="left:549px;top:321px;height:19px;line-height:19px;color:#0a0f1c;width:37px;text-align:right;">5</div>
<svg style="left:886px;top:322px" width="12" height="14" viewBox="0 0 12 14"><rect x="0.200" y="0.300" width="11.600" height="13.500" rx="1.600" fill="#0c1a4c"/><rect x="2.300" y="1.400" width="9.100" height="10.900" rx=".5" fill="url(#gBook)"/><rect x="2.300" y="12.200" width="9.300" height="1.200" fill="#2a6cd0"/><path d="M11.500 1.400v12" stroke="#2a6cd0" stroke-width=".7"/><path d="M2.300 1.700h9" stroke="#f4fbff" stroke-width=".7"/></svg>
<div class="t" style="left:903px;top:321px;height:19px;line-height:19px;color:#0a0f1c;letter-spacing:-.2px;">Składnik</div>
<div style="left:1267px;top:320px;width:100px;height:19px;box-sizing:border-box;border:1px solid #8691a8;background:linear-gradient(#f1f3f7 0,#eceef3 48%,#e5e8ef 52%,#e7eaf0 100%);box-shadow:inset 1px 1px 0 #fbfcfd;"></div>
<div class="t" style="left:1267px;top:321px;height:19px;line-height:19px;color:#0a0f1c;width:100px;text-align:center;">0 %</div>
<div style="left:202px;top:338px;width:11px;height:19px;background:linear-gradient(#eceff4 0,#e4e7ee 46%,#d9dee8 50%,#dce0ea 100%);"></div>
<div style="left:213px;top:339px;width:1px;height:19px;background:#eef1f5;"></div>
<div style="left:214px;top:339px;width:1178px;height:19px;background:#f5f6f8;"></div>
<div style="left:549px;top:339px;width:39px;height:19px;background:#fffcc4;"></div>
<div class="t" style="left:272px;top:340px;height:19px;line-height:19px;color:#0a0f1c;letter-spacing:-.2px;">Składnik A2</div>
<div class="t" style="left:378px;top:340px;height:19px;line-height:19px;color:#0a0f1c;letter-spacing:-.2px;">Składnik A2</div>
<div class="t" style="left:549px;top:340px;height:19px;line-height:19px;color:#0a0f1c;width:37px;text-align:right;">2</div>
<svg style="left:886px;top:341px" width="12" height="14" viewBox="0 0 12 14"><rect x="0.200" y="0.300" width="11.600" height="13.500" rx="1.600" fill="#0c1a4c"/><rect x="2.300" y="1.400" width="9.100" height="10.900" rx=".5" fill="url(#gBook)"/><rect x="2.300" y="12.200" width="9.300" height="1.200" fill="#2a6cd0"/><path d="M11.500 1.400v12" stroke="#2a6cd0" stroke-width=".7"/><path d="M2.300 1.700h9" stroke="#f4fbff" stroke-width=".7"/></svg>
<div class="t" style="left:903px;top:340px;height:19px;line-height:19px;color:#0a0f1c;letter-spacing:-.2px;">Składnik</div>
<div style="left:1267px;top:339px;width:100px;height:19px;box-sizing:border-box;border:1px solid #8691a8;background:linear-gradient(#f1f3f7 0,#eceef3 48%,#e5e8ef 52%,#e7eaf0 100%);box-shadow:inset 1px 1px 0 #fbfcfd;"></div>
<div class="t" style="left:1267px;top:340px;height:19px;line-height:19px;color:#0a0f1c;width:100px;text-align:center;">0 %</div>
<div style="left:202px;top:357px;width:11px;height:19px;background:linear-gradient(#eceff4 0,#e4e7ee 46%,#d9dee8 50%,#dce0ea 100%);"></div>
<div style="left:213px;top:358px;width:1px;height:19px;background:#eef1f5;"></div>
<div style="left:214px;top:358px;width:1178px;height:19px;background:#ecf5eb;"></div>
<div style="left:549px;top:358px;width:39px;height:19px;background:#fffcc4;"></div>
<div class="t" style="left:272px;top:359px;height:19px;line-height:19px;color:#0a0f1c;letter-spacing:-.2px;">Składnik A3</div>
<div class="t" style="left:378px;top:359px;height:19px;line-height:19px;color:#0a0f1c;letter-spacing:-.2px;">Składnik A3</div>
<div class="t" style="left:549px;top:359px;height:19px;line-height:19px;color:#0a0f1c;width:37px;text-align:right;">4</div>
<svg style="left:886px;top:360px" width="12" height="14" viewBox="0 0 12 14"><rect x="0.200" y="0.300" width="11.600" height="13.500" rx="1.600" fill="#0c1a4c"/><rect x="2.300" y="1.400" width="9.100" height="10.900" rx=".5" fill="url(#gBook)"/><rect x="2.300" y="12.200" width="9.300" height="1.200" fill="#2a6cd0"/><path d="M11.500 1.400v12" stroke="#2a6cd0" stroke-width=".7"/><path d="M2.300 1.700h9" stroke="#f4fbff" stroke-width=".7"/></svg>
<div class="t" style="left:903px;top:359px;height:19px;line-height:19px;color:#0a0f1c;letter-spacing:-.2px;">Składnik</div>
<div style="left:1267px;top:358px;width:100px;height:19px;box-sizing:border-box;border:1px solid #8691a8;background:linear-gradient(#f1f3f7 0,#eceef3 48%,#e5e8ef 52%,#e7eaf0 100%);box-shadow:inset 1px 1px 0 #fbfcfd;"></div>
<div class="t" style="left:1267px;top:359px;height:19px;line-height:19px;color:#0a0f1c;width:100px;text-align:center;">0 %</div>
<div style="left:202px;top:376px;width:11px;height:19px;background:linear-gradient(#eceff4 0,#e4e7ee 46%,#d9dee8 50%,#dce0ea 100%);"></div>
<div style="left:213px;top:377px;width:1px;height:19px;background:#eef1f5;"></div>
<div style="left:214px;top:377px;width:1178px;height:19px;background:#f5f6f8;"></div>
<div style="left:549px;top:377px;width:39px;height:19px;background:#fffcc4;"></div>
<div class="t" style="left:272px;top:378px;height:19px;line-height:19px;color:#0a0f1c;letter-spacing:-.2px;">Składnik A4</div>
<div class="t" style="left:378px;top:378px;height:19px;line-height:19px;color:#0a0f1c;letter-spacing:-.2px;">Składnik A4</div>
<div class="t" style="left:549px;top:378px;height:19px;line-height:19px;color:#0a0f1c;width:37px;text-align:right;">8</div>
<svg style="left:886px;top:379px" width="12" height="14" viewBox="0 0 12 14"><rect x="0.200" y="0.300" width="11.600" height="13.500" rx="1.600" fill="#0c1a4c"/><rect x="2.300" y="1.400" width="9.100" height="10.900" rx=".5" fill="url(#gBook)"/><rect x="2.300" y="12.200" width="9.300" height="1.200" fill="#2a6cd0"/><path d="M11.500 1.400v12" stroke="#2a6cd0" stroke-width=".7"/><path d="M2.300 1.700h9" stroke="#f4fbff" stroke-width=".7"/></svg>
<div class="t" style="left:903px;top:378px;height:19px;line-height:19px;color:#0a0f1c;letter-spacing:-.2px;">Składnik</div>
<div style="left:1267px;top:377px;width:100px;height:19px;box-sizing:border-box;border:1px solid #8691a8;background:linear-gradient(#f1f3f7 0,#eceef3 48%,#e5e8ef 52%,#e7eaf0 100%);box-shadow:inset 1px 1px 0 #fbfcfd;"></div>
<div class="t" style="left:1267px;top:378px;height:19px;line-height:19px;color:#0a0f1c;width:100px;text-align:center;">0 %</div>
<div style="left:202px;top:395px;width:11px;height:19px;background:linear-gradient(#eceff4 0,#e4e7ee 46%,#d9dee8 50%,#dce0ea 100%);"></div>
<div style="left:213px;top:396px;width:1px;height:19px;background:#eef1f5;"></div>
<div style="left:214px;top:396px;width:1178px;height:19px;background:#ecf5eb;"></div>
<div class="t" style="left:253px;top:397px;height:19px;line-height:19px;color:#0a0f1c;">Półprodukt 3</div>
<div class="t" style="left:378px;top:397px;height:19px;line-height:19px;color:#0a0f1c;">Osłona</div>
<div class="t" style="left:549px;top:397px;height:19px;line-height:19px;color:#0a0f1c;width:37px;text-align:right;">1</div>
<div class="t" style="left:590px;top:397px;height:19px;line-height:19px;color:#0a0f1c;width:98px;overflow:hidden;letter-spacing:-.14px;">Technologia półprod</div>
<div class="t" style="left:690px;top:397px;height:19px;line-height:19px;color:#0a0f1c;">6068</div>
<div class="t" style="left:783px;top:397px;height:19px;line-height:19px;color:#0a0f1c;letter-spacing:-.12px;">ZO 00012/PR/2024</div>
<svg style="left:886px;top:397px" width="12" height="15" viewBox="0 0 12 15"><rect x="4" y="0.500" width="7.500" height="10.500" rx="1.600" fill="url(#gProd)" stroke="#c8540c" stroke-width=".9"/><rect x="4.600" y="1" width="6.300" height="2.300" rx="1" fill="#fde898"/><rect x="0.500" y="3.500" width="8" height="11" rx="1.600" fill="url(#gProd)" stroke="#c8540c" stroke-width=".9"/><rect x="1.100" y="4" width="6.800" height="2.600" rx="1" fill="#fde898"/><path d="M1.700 7v6.500" stroke="#fdd868" stroke-width="1"/></svg>
<div class="t" style="left:903px;top:397px;height:19px;line-height:19px;color:#0a0f1c;">Produkt</div>
<div class="t" style="left:957px;top:397px;height:19px;line-height:19px;color:#0a0f1c;letter-spacing:-.23px;">ZPR 00009/2024</div>
<div class="t" style="left:1128px;top:397px;height:19px;line-height:19px;color:#0a0f1c;width:139px;overflow:hidden;">Technologia półproduktu 3</div>
<div style="left:1267px;top:396px;width:100px;height:19px;box-sizing:border-box;border:1px solid #8691a8;background:linear-gradient(#f1f3f7 0,#eceef3 48%,#e5e8ef 52%,#e7eaf0 100%);box-shadow:inset 1px 1px 0 #fbfcfd;"></div>
<div class="t" style="left:1267px;top:397px;height:19px;line-height:19px;color:#0a0f1c;width:100px;text-align:center;">0 %</div>
<div style="left:202px;top:414px;width:11px;height:19px;background:linear-gradient(#eceff4 0,#e4e7ee 46%,#d9dee8 50%,#dce0ea 100%);"></div>
<div style="left:213px;top:415px;width:1px;height:19px;background:#eef1f5;"></div>
<div style="left:214px;top:415px;width:1178px;height:19px;background:#f5f6f8;"></div>
<div style="left:549px;top:415px;width:39px;height:19px;background:#fffcc4;"></div>
<div class="t" style="left:272px;top:416px;height:19px;line-height:19px;color:#0a0f1c;letter-spacing:-.2px;">Składnik B1</div>
<div class="t" style="left:378px;top:416px;height:19px;line-height:19px;color:#0a0f1c;letter-spacing:-.2px;">Składnik B1</div>
<div class="t" style="left:549px;top:416px;height:19px;line-height:19px;color:#0a0f1c;width:37px;text-align:right;">4</div>
<svg style="left:886px;top:417px" width="12" height="14" viewBox="0 0 12 14"><rect x="0.200" y="0.300" width="11.600" height="13.500" rx="1.600" fill="#0c1a4c"/><rect x="2.300" y="1.400" width="9.100" height="10.900" rx=".5" fill="url(#gBook)"/><rect x="2.300" y="12.200" width="9.300" height="1.200" fill="#2a6cd0"/><path d="M11.500 1.400v12" stroke="#2a6cd0" stroke-width=".7"/><path d="M2.300 1.700h9" stroke="#f4fbff" stroke-width=".7"/></svg>
<div class="t" style="left:903px;top:416px;height:19px;line-height:19px;color:#0a0f1c;letter-spacing:-.2px;">Składnik</div>
<div style="left:1267px;top:415px;width:100px;height:19px;box-sizing:border-box;border:1px solid #8691a8;background:linear-gradient(#f1f3f7 0,#eceef3 48%,#e5e8ef 52%,#e7eaf0 100%);box-shadow:inset 1px 1px 0 #fbfcfd;"></div>
<div class="t" style="left:1267px;top:416px;height:19px;line-height:19px;color:#0a0f1c;width:100px;text-align:center;">0 %</div>
<div style="left:202px;top:433px;width:11px;height:19px;background:linear-gradient(#eceff4 0,#e4e7ee 46%,#d9dee8 50%,#dce0ea 100%);"></div>
<div style="left:213px;top:434px;width:1px;height:19px;background:#eef1f5;"></div>
<div style="left:214px;top:434px;width:1178px;height:19px;background:#ecf5eb;"></div>
<div style="left:549px;top:434px;width:39px;height:19px;background:#fffcc4;"></div>
<div class="t" style="left:272px;top:435px;height:19px;line-height:19px;color:#0a0f1c;letter-spacing:-.2px;">Składnik B2</div>
<div class="t" style="left:378px;top:435px;height:19px;line-height:19px;color:#0a0f1c;letter-spacing:-.2px;">Składnik B2</div>
<div class="t" style="left:549px;top:435px;height:19px;line-height:19px;color:#0a0f1c;width:37px;text-align:right;">2</div>
<svg style="left:886px;top:436px" width="12" height="14" viewBox="0 0 12 14"><rect x="0.200" y="0.300" width="11.600" height="13.500" rx="1.600" fill="#0c1a4c"/><rect x="2.300" y="1.400" width="9.100" height="10.900" rx=".5" fill="url(#gBook)"/><rect x="2.300" y="12.200" width="9.300" height="1.200" fill="#2a6cd0"/><path d="M11.500 1.400v12" stroke="#2a6cd0" stroke-width=".7"/><path d="M2.300 1.700h9" stroke="#f4fbff" stroke-width=".7"/></svg>
<div class="t" style="left:903px;top:435px;height:19px;line-height:19px;color:#0a0f1c;letter-spacing:-.2px;">Składnik</div>
<div style="left:1267px;top:434px;width:100px;height:19px;box-sizing:border-box;border:1px solid #8691a8;background:linear-gradient(#f1f3f7 0,#eceef3 48%,#e5e8ef 52%,#e7eaf0 100%);box-shadow:inset 1px 1px 0 #fbfcfd;"></div>
<div class="t" style="left:1267px;top:435px;height:19px;line-height:19px;color:#0a0f1c;width:100px;text-align:center;">0 %</div>
<div style="left:202px;top:452px;width:11px;height:19px;background:linear-gradient(#eceff4 0,#e4e7ee 46%,#d9dee8 50%,#dce0ea 100%);"></div>
<div style="left:213px;top:453px;width:1px;height:19px;background:#eef1f5;"></div>
<div style="left:214px;top:453px;width:1178px;height:19px;background:#f5f6f8;"></div>
<div class="t" style="left:253px;top:454px;height:19px;line-height:19px;color:#0a0f1c;">Półprodukt 4</div>
<div class="t" style="left:378px;top:454px;height:19px;line-height:19px;color:#0a0f1c;">Przednia noga</div>
<div class="t" style="left:549px;top:454px;height:19px;line-height:19px;color:#0a0f1c;width:37px;text-align:right;">2</div>
<div class="t" style="left:590px;top:454px;height:19px;line-height:19px;color:#0a0f1c;width:98px;overflow:hidden;letter-spacing:-.14px;">Technologia półprod</div>
<div class="t" style="left:690px;top:454px;height:19px;line-height:19px;color:#0a0f1c;">6069</div>
<div class="t" style="left:783px;top:454px;height:19px;line-height:19px;color:#0a0f1c;letter-spacing:-.12px;">ZO 00012/PR/2024</div>
<svg style="left:886px;top:454px" width="12" height="15" viewBox="0 0 12 15"><rect x="4" y="0.500" width="7.500" height="10.500" rx="1.600" fill="url(#gProd)" stroke="#c8540c" stroke-width=".9"/><rect x="4.600" y="1" width="6.300" height="2.300" rx="1" fill="#fde898"/><rect x="0.500" y="3.500" width="8" height="11" rx="1.600" fill="url(#gProd)" stroke="#c8540c" stroke-width=".9"/><rect x="1.100" y="4" width="6.800" height="2.600" rx="1" fill="#fde898"/><path d="M1.700 7v6.500" stroke="#fdd868" stroke-width="1"/></svg>
<div class="t" style="left:903px;top:454px;height:19px;line-height:19px;color:#0a0f1c;">Produkt</div>
<div class="t" style="left:957px;top:454px;height:19px;line-height:19px;color:#0a0f1c;letter-spacing:-.23px;">ZPR 00009/2024</div>
<div class="t" style="left:1128px;top:454px;height:19px;line-height:19px;color:#0a0f1c;width:139px;overflow:hidden;">Technologia półproduktu 4</div>
<div style="left:1267px;top:453px;width:100px;height:19px;box-sizing:border-box;border:1px solid #8691a8;background:linear-gradient(#f1f3f7 0,#eceef3 48%,#e5e8ef 52%,#e7eaf0 100%);box-shadow:inset 1px 1px 0 #fbfcfd;"></div>
<div class="t" style="left:1267px;top:454px;height:19px;line-height:19px;color:#0a0f1c;width:100px;text-align:center;">0 %</div>
<div style="left:202px;top:471px;width:11px;height:19px;background:linear-gradient(#eceff4 0,#e4e7ee 46%,#d9dee8 50%,#dce0ea 100%);"></div>
<div style="left:213px;top:472px;width:1px;height:19px;background:#eef1f5;"></div>
<div style="left:214px;top:472px;width:1178px;height:19px;background:#ecf5eb;"></div>
<div class="t" style="left:253px;top:473px;height:19px;line-height:19px;color:#0a0f1c;">Półprodukt 5</div>
<div class="t" style="left:378px;top:473px;height:19px;line-height:19px;color:#0a0f1c;">Blacha stołu</div>
<div class="t" style="left:549px;top:473px;height:19px;line-height:19px;color:#0a0f1c;width:37px;text-align:right;">1</div>
<div class="t" style="left:590px;top:473px;height:19px;line-height:19px;color:#0a0f1c;width:98px;overflow:hidden;letter-spacing:-.14px;">Technologia półprod</div>
<div class="t" style="left:690px;top:473px;height:19px;line-height:19px;color:#0a0f1c;">6070</div>
<div class="t" style="left:783px;top:473px;height:19px;line-height:19px;color:#0a0f1c;letter-spacing:-.12px;">ZO 00012/PR/2024</div>
<svg style="left:886px;top:473px" width="12" height="15" viewBox="0 0 12 15"><rect x="4" y="0.500" width="7.500" height="10.500" rx="1.600" fill="url(#gProd)" stroke="#c8540c" stroke-width=".9"/><rect x="4.600" y="1" width="6.300" height="2.300" rx="1" fill="#fde898"/><rect x="0.500" y="3.500" width="8" height="11" rx="1.600" fill="url(#gProd)" stroke="#c8540c" stroke-width=".9"/><rect x="1.100" y="4" width="6.800" height="2.600" rx="1" fill="#fde898"/><path d="M1.700 7v6.500" stroke="#fdd868" stroke-width="1"/></svg>
<div class="t" style="left:903px;top:473px;height:19px;line-height:19px;color:#0a0f1c;">Produkt</div>
<div class="t" style="left:957px;top:473px;height:19px;line-height:19px;color:#0a0f1c;letter-spacing:-.23px;">ZPR 00009/2024</div>
<div class="t" style="left:1128px;top:473px;height:19px;line-height:19px;color:#0a0f1c;width:139px;overflow:hidden;">Technologia półproduktu 5</div>
<div style="left:1267px;top:472px;width:100px;height:19px;box-sizing:border-box;border:1px solid #8691a8;background:linear-gradient(#f1f3f7 0,#eceef3 48%,#e5e8ef 52%,#e7eaf0 100%);box-shadow:inset 1px 1px 0 #fbfcfd;"></div>
<div class="t" style="left:1267px;top:473px;height:19px;line-height:19px;color:#0a0f1c;width:100px;text-align:center;">0 %</div>
<div style="left:202px;top:490px;width:11px;height:19px;background:linear-gradient(#eceff4 0,#e4e7ee 46%,#d9dee8 50%,#dce0ea 100%);"></div>
<div style="left:213px;top:491px;width:1px;height:19px;background:#eef1f5;"></div>
<div style="left:214px;top:491px;width:1178px;height:19px;background:#f5f6f8;"></div>
<div style="left:549px;top:491px;width:39px;height:19px;background:#fffcc4;"></div>
<div style="left:588px;top:491px;width:100px;height:19px;background:#fffcc4;"></div>
<div style="left:1127px;top:491px;width:140px;height:19px;background:#fffcc4;"></div>
<div class="t" style="left:272px;top:492px;height:19px;line-height:19px;color:#0a0f1c;">Półprodukt 5.1</div>
<div class="t" style="left:378px;top:492px;height:19px;line-height:19px;color:#0a0f1c;">Półprodukt 5.1</div>
<div class="t" style="left:549px;top:492px;height:19px;line-height:19px;color:#0a0f1c;width:37px;text-align:right;">1</div>
<div class="t" style="left:590px;top:492px;height:19px;line-height:19px;color:#0a0f1c;width:98px;overflow:hidden;letter-spacing:-.14px;">Technologia półprod</div>
<svg style="left:886px;top:492px" width="12" height="15" viewBox="0 0 12 15"><rect x="4" y="0.500" width="7.500" height="10.500" rx="1.600" fill="url(#gProd)" stroke="#c8540c" stroke-width=".9"/><rect x="4.600" y="1" width="6.300" height="2.300" rx="1" fill="#fde898"/><rect x="0.500" y="3.500" width="8" height="11" rx="1.600" fill="url(#gProd)" stroke="#c8540c" stroke-width=".9"/><rect x="1.100" y="4" width="6.800" height="2.600" rx="1" fill="#fde898"/><path d="M1.700 7v6.500" stroke="#fdd868" stroke-width="1"/></svg>
<div class="t" style="left:903px;top:492px;height:19px;line-height:19px;color:#0a0f1c;">Produkt</div>
<div class="t" style="left:1128px;top:492px;height:19px;line-height:19px;color:#0a0f1c;width:139px;overflow:hidden;">Technologia półproduktu 5.1</div>
<div style="left:1267px;top:491px;width:100px;height:19px;box-sizing:border-box;border:1px solid #8691a8;background:linear-gradient(#f1f3f7 0,#eceef3 48%,#e5e8ef 52%,#e7eaf0 100%);box-shadow:inset 1px 1px 0 #fbfcfd;"></div>
<div class="t" style="left:1267px;top:492px;height:19px;line-height:19px;color:#0a0f1c;width:100px;text-align:center;">0 %</div>
<div style="left:202px;top:509px;width:11px;height:19px;background:linear-gradient(#eceff4 0,#e4e7ee 46%,#d9dee8 50%,#dce0ea 100%);"></div>
<div style="left:213px;top:510px;width:1px;height:19px;background:#eef1f5;"></div>
<div style="left:214px;top:510px;width:1178px;height:19px;background:#ecf5eb;"></div>
<div style="left:549px;top:510px;width:39px;height:19px;background:#fffcc4;"></div>
<div class="t" style="left:291px;top:511px;height:19px;line-height:19px;color:#0a0f1c;letter-spacing:-.2px;">Składnik A10</div>
<div class="t" style="left:378px;top:511px;height:19px;line-height:19px;color:#0a0f1c;letter-spacing:-.2px;">Składnik A10</div>
<div class="t" style="left:549px;top:511px;height:19px;line-height:19px;color:#0a0f1c;width:37px;text-align:right;">2</div>
<svg style="left:886px;top:512px" width="12" height="14" viewBox="0 0 12 14"><rect x="0.200" y="0.300" width="11.600" height="13.500" rx="1.600" fill="#0c1a4c"/><rect x="2.300" y="1.400" width="9.100" height="10.900" rx=".5" fill="url(#gBook)"/><rect x="2.300" y="12.200" width="9.300" height="1.200" fill="#2a6cd0"/><path d="M11.500 1.400v12" stroke="#2a6cd0" stroke-width=".7"/><path d="M2.300 1.700h9" stroke="#f4fbff" stroke-width=".7"/></svg>
<div class="t" style="left:903px;top:511px;height:19px;line-height:19px;color:#0a0f1c;letter-spacing:-.2px;">Składnik</div>
<div style="left:1267px;top:510px;width:100px;height:19px;box-sizing:border-box;border:1px solid #8691a8;background:linear-gradient(#f1f3f7 0,#eceef3 48%,#e5e8ef 52%,#e7eaf0 100%);box-shadow:inset 1px 1px 0 #fbfcfd;"></div>
<div class="t" style="left:1267px;top:511px;height:19px;line-height:19px;color:#0a0f1c;width:100px;text-align:center;">0 %</div>
<div style="left:202px;top:528px;width:11px;height:19px;background:linear-gradient(#eceff4 0,#e4e7ee 46%,#d9dee8 50%,#dce0ea 100%);"></div>
<div style="left:213px;top:529px;width:1px;height:19px;background:#eef1f5;"></div>
<div style="left:214px;top:529px;width:1178px;height:19px;background:#f5f6f8;"></div>
<div style="left:549px;top:529px;width:39px;height:19px;background:#fffcc4;"></div>
<div class="t" style="left:291px;top:530px;height:19px;line-height:19px;color:#0a0f1c;">Detal 6</div>
<div class="t" style="left:378px;top:530px;height:19px;line-height:19px;color:#0a0f1c;">Detal 6</div>
<div class="t" style="left:549px;top:530px;height:19px;line-height:19px;color:#0a0f1c;width:37px;text-align:right;">1</div>
<svg style="left:885px;top:531px" width="13" height="15" viewBox="0 0 13 15"><rect x="0.600" y="1.900" width="12" height="12" rx="1.600" fill="url(#gDet)" stroke="#d4741c" stroke-width="1.100"/><path d="M2 3.300h3.400" stroke="#fff8c8" stroke-width="1"/><circle cx="7.200" cy="2.900" r="2.500" fill="#2a6cd8" stroke="#10306c" stroke-width=".6"/><circle cx="6.700" cy="2.400" r=".8" fill="#9cc8f8"/></svg>
<div class="t" style="left:903px;top:530px;height:19px;line-height:19px;color:#0a0f1c;">Detal</div>
<div class="t" style="left:1047px;top:530px;height:19px;line-height:19px;color:#0a0f1c;transform:scaleX(.92);transform-origin:0 50%;">Blacha 2mm</div>
<div style="left:1267px;top:529px;width:100px;height:19px;box-sizing:border-box;border:1px solid #8691a8;background:linear-gradient(#f1f3f7 0,#eceef3 48%,#e5e8ef 52%,#e7eaf0 100%);box-shadow:inset 1px 1px 0 #fbfcfd;"></div>
<div class="t" style="left:1267px;top:530px;height:19px;line-height:19px;color:#0a0f1c;width:100px;text-align:center;">0 %</div>
<div style="left:202px;top:547px;width:11px;height:19px;background:linear-gradient(#eceff4 0,#e4e7ee 46%,#d9dee8 50%,#dce0ea 100%);"></div>
<div style="left:213px;top:548px;width:1px;height:19px;background:#eef1f5;"></div>
<div style="left:214px;top:548px;width:1178px;height:19px;background:#ecf5eb;"></div>
<div style="left:549px;top:548px;width:39px;height:19px;background:#fffcc4;"></div>
<div class="t" style="left:291px;top:549px;height:19px;line-height:19px;color:#0a0f1c;">Detal 7</div>
<div class="t" style="left:378px;top:549px;height:19px;line-height:19px;color:#0a0f1c;">Detal 7</div>
<div class="t" style="left:549px;top:549px;height:19px;line-height:19px;color:#0a0f1c;width:37px;text-align:right;">1</div>
<svg style="left:885px;top:550px" width="13" height="15" viewBox="0 0 13 15"><rect x="0.600" y="1.900" width="12" height="12" rx="1.600" fill="url(#gDet)" stroke="#d4741c" stroke-width="1.100"/><path d="M2 3.300h3.400" stroke="#fff8c8" stroke-width="1"/><circle cx="7.200" cy="2.900" r="2.500" fill="#2a6cd8" stroke="#10306c" stroke-width=".6"/><circle cx="6.700" cy="2.400" r=".8" fill="#9cc8f8"/></svg>
<div class="t" style="left:903px;top:549px;height:19px;line-height:19px;color:#0a0f1c;">Detal</div>
<div class="t" style="left:1047px;top:549px;height:19px;line-height:19px;color:#0a0f1c;transform:scaleX(.92);transform-origin:0 50%;">Blacha 2mm</div>
<div style="left:1267px;top:548px;width:100px;height:19px;box-sizing:border-box;border:1px solid #8691a8;background:linear-gradient(#f1f3f7 0,#eceef3 48%,#e5e8ef 52%,#e7eaf0 100%);box-shadow:inset 1px 1px 0 #fbfcfd;"></div>
<div class="t" style="left:1267px;top:549px;height:19px;line-height:19px;color:#0a0f1c;width:100px;text-align:center;">0 %</div>
<div style="left:202px;top:566px;width:11px;height:19px;background:linear-gradient(#eceff4 0,#e4e7ee 46%,#d9dee8 50%,#dce0ea 100%);"></div>
<div style="left:213px;top:567px;width:1px;height:19px;background:#eef1f5;"></div>
<div style="left:214px;top:567px;width:1178px;height:19px;background:#f5f6f8;"></div>
<div style="left:549px;top:567px;width:39px;height:19px;background:#fffcc4;"></div>
<div class="t" style="left:272px;top:568px;height:19px;line-height:19px;color:#0a0f1c;letter-spacing:-.2px;">Składnik 25</div>
<div class="t" style="left:378px;top:568px;height:19px;line-height:19px;color:#0a0f1c;letter-spacing:-.2px;">Składnik 25</div>
<div class="t" style="left:549px;top:568px;height:19px;line-height:19px;color:#0a0f1c;width:37px;text-align:right;">2</div>
<svg style="left:886px;top:569px" width="12" height="14" viewBox="0 0 12 14"><rect x="0.200" y="0.300" width="11.600" height="13.500" rx="1.600" fill="#0c1a4c"/><rect x="2.300" y="1.400" width="9.100" height="10.900" rx=".5" fill="url(#gBook)"/><rect x="2.300" y="12.200" width="9.300" height="1.200" fill="#2a6cd0"/><path d="M11.500 1.400v12" stroke="#2a6cd0" stroke-width=".7"/><path d="M2.300 1.700h9" stroke="#f4fbff" stroke-width=".7"/></svg>
<div class="t" style="left:903px;top:568px;height:19px;line-height:19px;color:#0a0f1c;letter-spacing:-.2px;">Składnik</div>
<div style="left:1267px;top:567px;width:100px;height:19px;box-sizing:border-box;border:1px solid #8691a8;background:linear-gradient(#f1f3f7 0,#eceef3 48%,#e5e8ef 52%,#e7eaf0 100%);box-shadow:inset 1px 1px 0 #fbfcfd;"></div>
<div class="t" style="left:1267px;top:568px;height:19px;line-height:19px;color:#0a0f1c;width:100px;text-align:center;">0 %</div>
<div style="left:242px;top:207px;width:1px;height:274px;background-image:linear-gradient(#b4b9c5 50%,transparent 50%);background-size:1px 2px;"></div>
<div style="left:261px;top:226px;width:1px;height:66px;background-image:linear-gradient(#b4b9c5 50%,transparent 50%);background-size:1px 2px;"></div>
<div style="left:261px;top:321px;width:1px;height:66px;background-image:linear-gradient(#b4b9c5 50%,transparent 50%);background-size:1px 2px;"></div>
<div style="left:261px;top:416px;width:1px;height:28px;background-image:linear-gradient(#b4b9c5 50%,transparent 50%);background-size:1px 2px;"></div>
<div style="left:261px;top:492px;width:1px;height:85px;background-image:linear-gradient(#b4b9c5 50%,transparent 50%);background-size:1px 2px;"></div>
<div style="left:280px;top:511px;width:1px;height:47px;background-image:linear-gradient(#b4b9c5 50%,transparent 50%);background-size:1px 2px;"></div>
<svg style="left:220px;top:193px" width="6" height="6" viewBox="0 0 6 6"><path d="M6 0v6H0z" fill="#4a5060"/></svg>
<div style="left:227px;top:196px;width:5px;height:1px;background-image:linear-gradient(90deg,#b4b9c5 50%,transparent 50%);background-size:2px 1px;"></div>
<svg style="left:239px;top:212px" width="6" height="6" viewBox="0 0 6 6"><path d="M6 0v6H0z" fill="#4a5060"/></svg>
<div style="left:246px;top:215px;width:5px;height:1px;background-image:linear-gradient(90deg,#b4b9c5 50%,transparent 50%);background-size:2px 1px;"></div>
<div style="left:261px;top:234px;width:8px;height:1px;background-image:linear-gradient(90deg,#b4b9c5 50%,transparent 50%);background-size:2px 1px;"></div>
<div style="left:261px;top:253px;width:8px;height:1px;background-image:linear-gradient(90deg,#b4b9c5 50%,transparent 50%);background-size:2px 1px;"></div>
<div style="left:261px;top:272px;width:8px;height:1px;background-image:linear-gradient(90deg,#b4b9c5 50%,transparent 50%);background-size:2px 1px;"></div>
<div style="left:261px;top:291px;width:8px;height:1px;background-image:linear-gradient(90deg,#b4b9c5 50%,transparent 50%);background-size:2px 1px;"></div>
<svg style="left:239px;top:307px" width="6" height="6" viewBox="0 0 6 6"><path d="M6 0v6H0z" fill="#4a5060"/></svg>
<div style="left:246px;top:310px;width:5px;height:1px;background-image:linear-gradient(90deg,#b4b9c5 50%,transparent 50%);background-size:2px 1px;"></div>
<div style="left:261px;top:329px;width:8px;height:1px;background-image:linear-gradient(90deg,#b4b9c5 50%,transparent 50%);background-size:2px 1px;"></div>
<div style="left:261px;top:348px;width:8px;height:1px;background-image:linear-gradient(90deg,#b4b9c5 50%,transparent 50%);background-size:2px 1px;"></div>
<div style="left:261px;top:367px;width:8px;height:1px;background-image:linear-gradient(90deg,#b4b9c5 50%,transparent 50%);background-size:2px 1px;"></div>
<div style="left:261px;top:386px;width:8px;height:1px;background-image:linear-gradient(90deg,#b4b9c5 50%,transparent 50%);background-size:2px 1px;"></div>
<svg style="left:239px;top:402px" width="6" height="6" viewBox="0 0 6 6"><path d="M6 0v6H0z" fill="#4a5060"/></svg>
<div style="left:246px;top:405px;width:5px;height:1px;background-image:linear-gradient(90deg,#b4b9c5 50%,transparent 50%);background-size:2px 1px;"></div>
<div style="left:261px;top:424px;width:8px;height:1px;background-image:linear-gradient(90deg,#b4b9c5 50%,transparent 50%);background-size:2px 1px;"></div>
<div style="left:261px;top:443px;width:8px;height:1px;background-image:linear-gradient(90deg,#b4b9c5 50%,transparent 50%);background-size:2px 1px;"></div>
<svg style="left:240px;top:458px" width="5" height="8" viewBox="0 0 5 8"><path d="M0 0l4.5 4L0 8z" fill="#4a5060"/></svg>
<div style="left:246px;top:462px;width:5px;height:1px;background-image:linear-gradient(90deg,#b4b9c5 50%,transparent 50%);background-size:2px 1px;"></div>
<svg style="left:239px;top:478px" width="6" height="6" viewBox="0 0 6 6"><path d="M6 0v6H0z" fill="#4a5060"/></svg>
<div style="left:246px;top:481px;width:5px;height:1px;background-image:linear-gradient(90deg,#b4b9c5 50%,transparent 50%);background-size:2px 1px;"></div>
<svg style="left:258px;top:497px" width="6" height="6" viewBox="0 0 6 6"><path d="M6 0v6H0z" fill="#4a5060"/></svg>
<div style="left:265px;top:500px;width:5px;height:1px;background-image:linear-gradient(90deg,#b4b9c5 50%,transparent 50%);background-size:2px 1px;"></div>
<div style="left:280px;top:519px;width:8px;height:1px;background-image:linear-gradient(90deg,#b4b9c5 50%,transparent 50%);background-size:2px 1px;"></div>
<div style="left:280px;top:538px;width:8px;height:1px;background-image:linear-gradient(90deg,#b4b9c5 50%,transparent 50%);background-size:2px 1px;"></div>
<div style="left:280px;top:557px;width:8px;height:1px;background-image:linear-gradient(90deg,#b4b9c5 50%,transparent 50%);background-size:2px 1px;"></div>
<div style="left:261px;top:576px;width:8px;height:1px;background-image:linear-gradient(90deg,#b4b9c5 50%,transparent 50%);background-size:2px 1px;"></div>
<div style="left:252px;top:301px;width:1140px;height:1px;background-image:linear-gradient(90deg,#1c2250 50%,transparent 50%);background-size:2px 1px;"></div>
<div style="left:252px;top:319px;width:1140px;height:1px;background-image:linear-gradient(90deg,#1c2250 50%,transparent 50%);background-size:2px 1px;"></div>
<div style="left:252px;top:301px;width:1px;height:19px;background-image:linear-gradient(#1c2250 50%,transparent 50%);background-size:1px 2px;"></div>
<svg style="left:206px;top:307px" width="5" height="8" viewBox="0 0 5 8"><path d="M0 0l4.5 4L0 8z" fill="#1a1f30"/></svg>
<div style="left:234px;top:299px;width:820px;height:25px;border:2px solid #f0161a;border-radius:6px;box-sizing:border-box;box-shadow:1px 2px 4px rgba(40,40,60,.45),inset 1px 2px 4px rgba(40,40,60,.25);"></div>
<div style="left:517px;top:295px;width:30px;height:30px;border-radius:50%;background:radial-gradient(circle closest-side at 50% 50%,rgba(216,38,44,.93) 0,rgba(218,38,42,.93) 84%,rgba(252,24,24,.96) 93%,rgba(252,24,24,.96) 100%);box-shadow:1px 2px 4px rgba(40,40,60,.4);"></div>
<div class="t" style="left:517px;top:294px;height:30px;line-height:30px;width:30px;text-align:center;color:#fff;font-size:15px;-webkit-text-stroke:.35px #fff;">2</div>
<div style="left:202px;top:586px;width:1190px;height:2px;background:#b6c3d9;"></div>
<div style="left:202px;top:588px;width:1190px;height:1px;background:#eef1f5;"></div>
<div style="left:202px;top:589px;width:1190px;height:16px;background:linear-gradient(#dcdee2 0,#e8e9ec 40%,#ecedef 100%);"></div>
<div style="left:219px;top:590px;width:565px;height:14px;box-sizing:border-box;border:1px solid #a6abba;border-radius:3px;background:linear-gradient(#f6f7fa 0,#e4e7ef 45%,#cfd5e2 52%,#d2d8e4 100%);box-shadow:inset 0 0 0 1px rgba(255,255,255,.7);"></div>
<svg style="left:208px;top:593px" width="4" height="7" viewBox="0 0 4 7"><path d="M4 0v7L0 3.5z" fill="#9aa0ae"/></svg>
<svg style="left:1382px;top:593px" width="4" height="7" viewBox="0 0 4 7"><path d="M0 0v7l4-3.5z" fill="#9aa0ae"/></svg>
<div style="left:498px;top:594px;width:1px;height:6px;background:#5d6880;"></div>
<div style="left:501px;top:594px;width:1px;height:6px;background:#5d6880;"></div>
<div style="left:504px;top:594px;width:1px;height:6px;background:#5d6880;"></div>
<div style="left:202px;top:605px;width:1192px;height:1px;background:#8f9db7;"></div>
<div style="left:790px;top:608px;width:2px;height:2px;background:#7b89ab;"></div>
<div style="left:794px;top:608px;width:2px;height:2px;background:#7b89ab;"></div>
<div style="left:798px;top:608px;width:2px;height:2px;background:#7b89ab;"></div>
<div style="left:802px;top:608px;width:2px;height:2px;background:#7b89ab;"></div>
<div style="left:202px;top:639px;width:1191px;height:112px;border:1px solid #8f9db7;border-top:none;box-sizing:border-box;background:#bdc9dd;border-radius:3px;"></div>
<div style="left:202px;top:639px;width:1191px;height:4px;background:#fde7a4;border-radius:2px 2px 0 0;"></div>
<div style="left:203px;top:746px;width:1189px;height:4px;background:#fde7a4;"></div>
<div style="left:205px;top:614px;width:88px;height:25px;border:1px solid #98a4bc;border-bottom:none;border-radius:3px 3px 0 0;box-sizing:border-box;background:linear-gradient(#eff2f7 0,#e4e8f0 42%,#d8deea 56%,#d3dae7 100%);box-shadow:inset 1px 1px 0 rgba(255,255,255,.8);"></div>
<svg style="left:214px;top:618px" width="16" height="16" viewBox="0 0 16 16"><rect x="0.6" y="0.6" width="14.8" height="14.8" fill="#f2f6fc" stroke="#6d8fc8" stroke-width="1.2"/><rect x="2.6" y="3" width="10.8" height="2" fill="#c8dcf4" stroke="#5d88cc" stroke-width=".8"/><rect x="2.6" y="7" width="10.8" height="2" fill="#c8dcf4" stroke="#5d88cc" stroke-width=".8"/><rect x="2.6" y="11" width="10.8" height="2" fill="#c8dcf4" stroke="#5d88cc" stroke-width=".8"/></svg>
<div class="t" style="left:235px;top:617px;height:20px;line-height:20px;color:#16213a;letter-spacing:-0.25px;">Czynności</div>
<div style="left:293px;top:612px;width:85px;height:28px;border:1px solid #a3aec4;border-bottom:none;border-radius:3px 3px 0 0;box-sizing:border-box;background:linear-gradient(#fefdf8 0,#fdf7e4 52%,#fde9b0 58%,#fde7a6 100%);"></div>
<svg style="left:302px;top:618px" width="16" height="16" viewBox="0 0 16 16"><rect x="0" y="0" width="16" height="16" fill="#c8c8c8" opacity=".75"/><path d="M0.5 3.5l2-2.5 13 9-2 3z" fill="#f0d028" stroke="#a88810" stroke-width=".6"/><path d="M0.5 12l13-9 2 3-13 9z" fill="#e44830" stroke="#a02810" stroke-width=".6"/><path d="M2 3l11 7.6" stroke="#fff8a0" stroke-width=".7"/></svg>
<div class="t" style="left:323px;top:617px;height:20px;line-height:20px;color:#16213a;letter-spacing:0px;">Materiały</div>
<div style="left:379px;top:614px;width:98px;height:25px;border:1px solid #98a4bc;border-bottom:none;border-radius:3px 3px 0 0;box-sizing:border-box;background:linear-gradient(#eff2f7 0,#e4e8f0 42%,#d8deea 56%,#d3dae7 100%);box-shadow:inset 1px 1px 0 rgba(255,255,255,.8);"></div>
<svg style="left:388px;top:618px" width="16" height="16" viewBox="0 0 16 16"><rect x="0" y="0" width="16" height="16" fill="#c8c8c8" opacity=".75"/><path d="M1 4.5l8-4 6 10-8 5z" fill="#d42028" stroke="#801018" stroke-width=".7"/><path d="M7 15.5l8-5 .3 1.6-7.6 4.4z" fill="#f4f4f4" stroke="#999" stroke-width=".4"/><circle cx="8" cy="7" r="3" fill="#fff"/><path d="M9.6 5.6a2 2 0 1 0 0 2.8" stroke="#d42028" stroke-width="1" fill="none"/></svg>
<div class="t" style="left:409px;top:617px;height:20px;line-height:20px;color:#16213a;letter-spacing:-0.25px;">Technollogie</div>
<div style="left:478px;top:614px;width:88px;height:25px;border:1px solid #98a4bc;border-bottom:none;border-radius:3px 3px 0 0;box-sizing:border-box;background:linear-gradient(#eff2f7 0,#e4e8f0 42%,#d8deea 56%,#d3dae7 100%);box-shadow:inset 1px 1px 0 rgba(255,255,255,.8);"></div>
<svg style="left:487px;top:618px" width="16" height="16" viewBox="0 0 16 16"><rect x="0" y="0" width="16" height="16" fill="#c8c8c8" opacity=".5"/><path d="M8 0.6L15.4 8 8 15.4 0.6 8z" fill="#fad820" stroke="#302408" stroke-width="1.1"/><circle cx="8" cy="6" r="2.1" fill="#181818"/><path d="M7.2 7h1.6l.6 5H6.6z" fill="#181818"/></svg>
<div class="t" style="left:508px;top:617px;height:20px;line-height:20px;color:#16213a;letter-spacing:-0.1px;">Receptury</div>
<div style="left:567px;top:614px;width:76px;height:25px;border:1px solid #98a4bc;border-bottom:none;border-radius:3px 3px 0 0;box-sizing:border-box;background:linear-gradient(#eff2f7 0,#e4e8f0 42%,#d8deea 56%,#d3dae7 100%);box-shadow:inset 1px 1px 0 rgba(255,255,255,.8);"></div>
<svg style="left:576px;top:618px" width="16" height="16" viewBox="0 0 16 16"><rect x="0" y="0" width="16" height="16" fill="#c8c8c8" opacity=".45"/><path d="M5 5l5-4 5.5 2.5v8L10 14z" fill="#c81820"/><path d="M5 5l5 2 5.5-3.5L10 1z" fill="#f05058"/><path d="M0.5 9.5L4 7.5l4 2v5L4.5 16l-4-2z" fill="#d82028" stroke="#901018" stroke-width=".4"/><path d="M0.5 9.5l4 1.5L8 9.500" fill="none" stroke="#f88088" stroke-width=".7"/></svg>
<div class="t" style="left:597px;top:617px;height:20px;line-height:20px;color:#16213a;letter-spacing:-0.1px;">Historia</div>
<div style="left:644px;top:614px;width:73px;height:25px;border:1px solid #98a4bc;border-bottom:none;border-radius:3px 3px 0 0;box-sizing:border-box;background:linear-gradient(#eff2f7 0,#e4e8f0 42%,#d8deea 56%,#d3dae7 100%);box-shadow:inset 1px 1px 0 rgba(255,255,255,.8);"></div>
<svg style="left:653px;top:618px" width="16" height="16" viewBox="0 0 16 16"><rect x="0" y="0" width="16" height="16" fill="#c8c8c8" opacity=".6"/><path d="M7 0.800h2v8.200l2.400 5.400a.800.800 0 0 1-.700 1.100H5.300a.800.800 0 0 1-.700-1.100L7 9z" fill="#eccccc" stroke="#b06870" stroke-width=".6"/><path d="M7.600 3h.800v6.400l1.800 4.800H5.800l1.800-4.800z" fill="#d02838"/></svg>
<div class="t" style="left:674px;top:617px;height:20px;line-height:20px;color:#16213a;letter-spacing:-0.1px;">Zdjęcia</div>
<div style="left:718px;top:614px;width:133px;height:25px;border:1px solid #98a4bc;border-bottom:none;border-radius:3px 3px 0 0;box-sizing:border-box;background:linear-gradient(#eff2f7 0,#e4e8f0 42%,#d8deea 56%,#d3dae7 100%);box-shadow:inset 1px 1px 0 rgba(255,255,255,.8);"></div>
<svg style="left:727px;top:618px" width="16" height="16" viewBox="0 0 16 16"><rect x="0" y="0" width="16" height="16" fill="#c8c8c8" opacity=".6"/><rect x="0.8" y="3" width="14.4" height="10.4" fill="#e8bc50" stroke="#4c3410" stroke-width="1"/><rect x="0.8" y="3" width="14.4" height="2.4" fill="#3c2c18"/><path d="M2.6 8h7M11 8h2.6M2.6 10.6h11" stroke="#7c5818" stroke-width="1.2"/><path d="M15.4 6v2M15.4 10v2" stroke="#222" stroke-width="1.2"/></svg>
<div class="t" style="left:748px;top:617px;height:20px;line-height:20px;color:#16213a;letter-spacing:-0.2px;">Stany magazynowe</div>
<div style="left:852px;top:614px;width:67px;height:25px;border:1px solid #98a4bc;border-bottom:none;border-radius:3px 3px 0 0;box-sizing:border-box;background:linear-gradient(#eff2f7 0,#e4e8f0 42%,#d8deea 56%,#d3dae7 100%);box-shadow:inset 1px 1px 0 rgba(255,255,255,.8);"></div>
<svg style="left:861px;top:618px" width="16" height="16" viewBox="0 0 16 16"><path d="M3 3l10.5 10.5" stroke="#3a3a3a" stroke-width="1.8"/><path d="M2.4 2.4l3 3" stroke="#a8a8a8" stroke-width="1.8"/></svg>
<div class="t" style="left:882px;top:617px;height:20px;line-height:20px;color:#16213a;letter-spacing:-0.1px;">Sztuki</div>
<svg style="left:211px;top:650px" width="16" height="16" viewBox="0 0 16 16"><path d="M5.5 0.7h5v4.8h4.8v5h-4.8v4.8h-5v-4.8H0.7v-5h4.8z" fill="url(#gPlus)" stroke="#2a63cc" stroke-width="1.2" stroke-linejoin="round"/><path d="M6.6 5.6V1.9h2.8M1.9 9.4V6.6h3.7" fill="none" stroke="#b4d6fb" stroke-width=".9"/></svg>
<svg style="left:211px;top:678px" width="16" height="15" viewBox="0 0 16 15"><path d="M1.5 5.5l4-4h5.5v4l3 2v6.5H1.5z" fill="#fdfdfd" stroke="#c4c8d0" stroke-width="1"/><path d="M1.5 5.5h4v-4z" fill="#e4e6ea" stroke="#c4c8d0" stroke-width=".7"/><path d="M5 10.2l6.3-6.3 2.3 2.3-6.3 6.3z" fill="#3a86ea" stroke="#1d57b8" stroke-width=".7"/><path d="M11.3 3.9l1-1 2.3 2.3-1 1z" fill="#2a3a68"/><path d="M5 10.2l2.3 2.3-3.3 1z" fill="#f0d8b0" stroke="#555" stroke-width=".4"/><path d="M4 13.5l.5-1.6 1.1 1.1z" fill="#222"/></svg>
<svg style="left:213px;top:708px" width="12" height="12" viewBox="0 0 12 12"><path d="M3 0.400L6 3.400 9 0.400l2.600 2.600L8.600 6l3 3L9 11.600 6 8.600 3 11.600 0.400 9l3-3-3-3z" fill="url(#gX)" stroke="#3f9ad6" stroke-width=".5"/></svg>
<svg style="left:208px;top:738px" width="20" height="8" viewBox="0 0 20 8"><path d="M1.5 1v7M0 1h3" stroke="#141c38" stroke-width="1.1"/><rect x="5" y="2.600" width="11" height="8" fill="#f4f6fc" stroke="#8aa0d0" stroke-width="1"/></svg>
<svg style="left:1368px;top:651px" width="16" height="15" viewBox="0 0 16 15"><g stroke="#f4f7fb" stroke-width="2.800" stroke-linecap="round"><path d="M7 2.500h8M7 7.500h8M7 12.500h8"/></g><g stroke="#1e2744" stroke-width="1.200"><path d="M6.500 2.500h9M6.500 7.500h9M6.500 12.500h9"/></g><g fill="#d8ecfd" stroke="#2f6fd0" stroke-width=".9"><circle cx="2.500" cy="2.500" r="1.900"/><circle cx="2.500" cy="7.500" r="1.900"/><circle cx="2.500" cy="12.500" r="1.900"/></g></svg>
<div style="left:235px;top:644px;width:1107px;height:22px;background:linear-gradient(#e9ecf2 0,#e1e5ed 48%,#d4dae6 52%,#d7dde8 100%);"></div>
<svg style="left:237px;top:651px" width="8" height="8" viewBox="0 0 8 8"><path d="M4 0.300v7.400M0.300 4h7.400M1.400 1.400l5.200 5.200M6.600 1.400L1.400 6.600" stroke="#1a1f30" stroke-width=".75"/></svg>
<div class="t13" style="left:249px;top:645px;height:21px;line-height:21px;color:#3a4868;letter-spacing:-0.2px;">Typ</div>
<div class="t13" style="left:302px;top:645px;height:21px;line-height:21px;color:#3a4868;letter-spacing:-0.11px;">Surowiec</div>
<div class="t13" style="left:402px;top:645px;height:21px;line-height:21px;color:#3a4868;letter-spacing:-0.46px;">Grupa</div>
<div class="t13" style="left:502px;top:645px;height:21px;line-height:21px;color:#3a4868;letter-spacing:-0.2px;">Jm</div>
<div class="t13" style="left:542px;top:645px;height:21px;line-height:21px;color:#3a4868;letter-spacing:-0.36px;">Przeznaczenie</div>
<div class="t13" style="left:692px;top:645px;height:21px;line-height:21px;color:#3a4868;letter-spacing:-0.2px;">Etap</div>
<div class="t13" style="left:842px;top:645px;height:21px;line-height:21px;color:#3a4868;letter-spacing:-0.09px;">Operacja techn.</div>
<div class="t13" style="left:992px;top:645px;height:21px;line-height:21px;color:#3a4868;letter-spacing:-0.09px;">Typ gniazda prod.</div>
<div class="t13" style="left:1142px;top:645px;height:21px;line-height:21px;color:#3a4868;letter-spacing:0px;">Identyfikator</div>
<div class="t13" style="left:1262px;top:645px;height:21px;line-height:21px;color:#3a4868;width:80px;overflow:hidden;letter-spacing:0px;">Receptura pół</div>
<div style="left:246px;top:644px;width:1px;height:22px;background:rgba(255,255,255,.55);"></div>
<div style="left:245px;top:644px;width:1px;height:22px;background:rgba(150,160,185,.22);"></div>
<div style="left:299px;top:644px;width:1px;height:22px;background:rgba(255,255,255,.55);"></div>
<div style="left:298px;top:644px;width:1px;height:22px;background:rgba(150,160,185,.22);"></div>
<div style="left:399px;top:644px;width:1px;height:22px;background:rgba(255,255,255,.55);"></div>
<div style="left:398px;top:644px;width:1px;height:22px;background:rgba(150,160,185,.22);"></div>
<div style="left:499px;top:644px;width:1px;height:22px;background:rgba(255,255,255,.55);"></div>
<div style="left:498px;top:644px;width:1px;height:22px;background:rgba(150,160,185,.22);"></div>
<div style="left:539px;top:644px;width:1px;height:22px;background:rgba(255,255,255,.55);"></div>
<div style="left:538px;top:644px;width:1px;height:22px;background:rgba(150,160,185,.22);"></div>
<div style="left:689px;top:644px;width:1px;height:22px;background:rgba(255,255,255,.55);"></div>
<div style="left:688px;top:644px;width:1px;height:22px;background:rgba(150,160,185,.22);"></div>
<div style="left:839px;top:644px;width:1px;height:22px;background:rgba(255,255,255,.55);"></div>
<div style="left:838px;top:644px;width:1px;height:22px;background:rgba(150,160,185,.22);"></div>
<div style="left:989px;top:644px;width:1px;height:22px;background:rgba(255,255,255,.55);"></div>
<div style="left:988px;top:644px;width:1px;height:22px;background:rgba(150,160,185,.22);"></div>
<div style="left:1139px;top:644px;width:1px;height:22px;background:rgba(255,255,255,.55);"></div>
<div style="left:1138px;top:644px;width:1px;height:22px;background:rgba(150,160,185,.22);"></div>
<div style="left:1259px;top:644px;width:1px;height:22px;background:rgba(255,255,255,.55);"></div>
<div style="left:1258px;top:644px;width:1px;height:22px;background:rgba(150,160,185,.22);"></div>
<div style="left:235px;top:666px;width:12px;height:21px;background:linear-gradient(#e9ecf2 0,#e1e5ed 48%,#d4dae6 52%,#d7dde8 100%);"></div>
<svg style="left:237px;top:672px" width="7" height="9" viewBox="0 0 7 9"><path d="M0.400 2.200a3.100 2 0 0 1 6.200 0L4 5.200V9H3V5.200z" fill="#1a1f30"/><ellipse cx="3.500" cy="1.900" rx="1.700" ry=".7" fill="#c8ccd8"/></svg>
<div style="left:247px;top:666px;width:1095px;height:21px;background:#ecf5eb;"></div>
<div class="t13" style="left:247px;top:667px;height:20px;line-height:20px;width:1095px;text-align:center;color:#5a6478;letter-spacing:0.03px;">kliknij aby dodać filtr</div>
<div style="left:247px;top:686px;width:1095px;height:2px;background:#b4bccb;"></div>
<div style="left:235px;top:688px;width:12px;height:20px;background:linear-gradient(#e9ecf2 0,#e1e5ed 48%,#d4dae6 52%,#d7dde8 100%);"></div>
<div style="left:247px;top:688px;width:1095px;height:20px;background:#fff6df;"></div>
<svg style="left:252px;top:691px" width="12" height="14" viewBox="0 0 12 14"><rect x="0.200" y="0.300" width="11.600" height="13.500" rx="1.600" fill="#0c1a4c"/><rect x="2.300" y="1.400" width="9.100" height="10.900" rx=".5" fill="url(#gBook)"/><rect x="2.300" y="12.200" width="9.300" height="1.200" fill="#2a6cd0"/><path d="M11.500 1.400v12" stroke="#2a6cd0" stroke-width=".7"/><path d="M2.300 1.700h9" stroke="#f4fbff" stroke-width=".7"/></svg>
<div class="t13" style="left:270px;top:689px;height:20px;line-height:20px;letter-spacing:-0.2px;">Sk...</div>
<div class="t13" style="left:302px;top:689px;height:20px;line-height:20px;letter-spacing:-0.2px;">Składnik A1</div>
<div class="t13" style="left:502px;top:689px;height:20px;line-height:20px;letter-spacing:-0.27px;">szt</div>
<div class="t13" style="left:692px;top:689px;height:20px;line-height:20px;letter-spacing:-0.6px;">SPAWANIE</div>
<div class="t13" style="left:842px;top:689px;height:20px;line-height:20px;letter-spacing:-0.6px;">SPAWANIE</div>
<div class="t13" style="left:992px;top:689px;height:20px;line-height:20px;letter-spacing:-0.26px;">Produkcja</div>
<div style="left:235px;top:708px;width:12px;height:21px;background:linear-gradient(#e9ecf2 0,#e1e5ed 48%,#d4dae6 52%,#d7dde8 100%);"></div>
<div style="left:247px;top:708px;width:1095px;height:21px;background:#ecf5eb;"></div>
<svg style="left:252px;top:711px" width="12" height="14" viewBox="0 0 12 14"><rect x="0.200" y="0.300" width="11.600" height="13.500" rx="1.600" fill="#0c1a4c"/><rect x="2.300" y="1.400" width="9.100" height="10.900" rx=".5" fill="url(#gBook)"/><rect x="2.300" y="12.200" width="9.300" height="1.200" fill="#2a6cd0"/><path d="M11.500 1.400v12" stroke="#2a6cd0" stroke-width=".7"/><path d="M2.300 1.700h9" stroke="#f4fbff" stroke-width=".7"/></svg>
<div class="t13" style="left:270px;top:709px;height:20px;line-height:20px;letter-spacing:-0.2px;">Sk...</div>
<div class="t13" style="left:302px;top:709px;height:20px;line-height:20px;letter-spacing:-0.2px;">Składnik A2</div>
<div class="t13" style="left:502px;top:709px;height:20px;line-height:20px;letter-spacing:-0.27px;">szt</div>
<div class="t13" style="left:692px;top:709px;height:20px;line-height:20px;letter-spacing:-0.6px;">SPAWANIE</div>
<div class="t13" style="left:842px;top:709px;height:20px;line-height:20px;letter-spacing:-0.6px;">SPAWANIE</div>
<div class="t13" style="left:992px;top:709px;height:20px;line-height:20px;letter-spacing:-0.26px;">Produkcja</div>
<svg style="left:238px;top:694px" width="5" height="8" viewBox="0 0 5 8"><path d="M0 0l4.5 4L0 8z" fill="#1a1f30"/></svg>
<div style="left:235px;top:729px;width:1107px;height:15px;background:linear-gradient(#dcdee2 0,#e8e9ec 40%,#ecedef 100%);"></div>
<div style="left:253px;top:730px;width:604px;height:13px;box-sizing:border-box;border:1px solid #a6abba;border-radius:3px;background:linear-gradient(#f6f7fa 0,#e4e7ef 45%,#cfd5e2 52%,#d2d8e4 100%);box-shadow:inset 0 0 0 1px rgba(255,255,255,.7);"></div>
<svg style="left:241px;top:732px" width="4" height="7" viewBox="0 0 4 7"><path d="M4 0v7L0 3.5z" fill="#9aa0ae"/></svg>
<svg style="left:1332px;top:732px" width="4" height="7" viewBox="0 0 4 7"><path d="M0 0v7l4-3.5z" fill="#9aa0ae"/></svg>
<div style="left:552px;top:733px;width:1px;height:6px;background:#5d6880;"></div>
<div style="left:555px;top:733px;width:1px;height:6px;background:#5d6880;"></div>
<div style="left:558px;top:733px;width:1px;height:6px;background:#5d6880;"></div>
<div style="left:1343px;top:644px;width:16px;height:85px;background:linear-gradient(90deg,#dcdee2 0,#e8e9ec 40%,#ecedef 100%);"></div>
<svg style="left:1347px;top:649px" width="7" height="4" viewBox="0 0 7 4"><path d="M0 4h7L3.5 0z" fill="#9aa0ae"/></svg>
<svg style="left:1347px;top:720px" width="7" height="4" viewBox="0 0 7 4"><path d="M0 0h7L3.5 4z" fill="#9aa0ae"/></svg>
<div style="left:1344px;top:661px;width:14px;height:24px;box-sizing:border-box;border:1px solid #a6abba;border-radius:3px;background:linear-gradient(90deg,#fbfcfd 0,#e9ecf3 48%,#d3d9e6 52%,#d8dde9 100%);"></div>
<div style="left:1347px;top:670px;width:8px;height:1px;background:#5d6880;"></div>
<div style="left:1347px;top:673px;width:8px;height:1px;background:#5d6880;"></div>
<div style="left:1347px;top:676px;width:8px;height:1px;background:#5d6880;"></div>
<div style="left:790px;top:753px;width:2px;height:2px;background:#7b89ab;"></div>
<div style="left:794px;top:753px;width:2px;height:2px;background:#7b89ab;"></div>
<div style="left:798px;top:753px;width:2px;height:2px;background:#7b89ab;"></div>
<div style="left:802px;top:753px;width:2px;height:2px;background:#7b89ab;"></div>
<div style="left:790px;top:759px;width:2px;height:2px;background:#7b89ab;"></div>
<div style="left:794px;top:759px;width:2px;height:2px;background:#7b89ab;"></div>
<div style="left:798px;top:759px;width:2px;height:2px;background:#7b89ab;"></div>
<div style="left:802px;top:759px;width:2px;height:2px;background:#7b89ab;"></div>
<div style="left:202px;top:790px;width:1191px;height:49px;border:1px solid #8f9db7;border-top:none;box-sizing:border-box;background:#bdc9dd;border-radius:3px;"></div>
<div style="left:202px;top:790px;width:1191px;height:4px;background:#fde7a4;border-radius:2px 2px 0 0;"></div>
<div style="left:203px;top:833px;width:1189px;height:4px;background:#fde7a4;"></div>
<div style="left:204px;top:763px;width:69px;height:28px;border:1px solid #a3aec4;border-bottom:none;border-radius:3px 3px 0 0;box-sizing:border-box;background:linear-gradient(#fefdf8 0,#fdf7e4 52%,#fde9b0 58%,#fde7a6 100%);"></div>
<svg style="left:213px;top:770px" width="16" height="16" viewBox="0 0 16 16"><rect x="0.6" y="2.6" width="11" height="4.2" rx=".8" fill="#cfe4f8" stroke="#5a96dc" stroke-width="1.2"/><rect x="4" y="9.2" width="11.4" height="4.2" rx=".8" fill="#cfe4f8" stroke="#5a96dc" stroke-width="1.2"/></svg>
<div class="t" style="left:235px;top:768px;height:20px;line-height:20px;color:#16213a;letter-spacing:0px;">Etapy</div>
<div style="left:274px;top:765px;width:121px;height:25px;border:1px solid #98a4bc;border-bottom:none;border-radius:3px 3px 0 0;box-sizing:border-box;background:linear-gradient(#eff2f7 0,#e4e8f0 42%,#d8deea 56%,#d3dae7 100%);box-shadow:inset 1px 1px 0 rgba(255,255,255,.8);"></div>
<svg style="left:283px;top:770px" width="16" height="16" viewBox="0 0 16 16"><rect x="1.6" y="0.600" width="6" height="7.200" fill="#f4f6fd" stroke="#6a78b8" stroke-width="1.1"/><rect x="7.600" y="0.600" width="6" height="7.200" fill="#f4f6fd" stroke="#6a78b8" stroke-width="1.1"/><rect x="1.600" y="7.800" width="6" height="7.200" fill="#f4f6fd" stroke="#6a78b8" stroke-width="1.1"/></svg>
<div class="t" style="left:304px;top:768px;height:20px;line-height:20px;color:#16213a;letter-spacing:-0.1px;">Zapotrzebowanie</div>
<div style="left:396px;top:765px;width:87px;height:25px;border:1px solid #98a4bc;border-bottom:none;border-radius:3px 3px 0 0;box-sizing:border-box;background:linear-gradient(#eff2f7 0,#e4e8f0 42%,#d8deea 56%,#d3dae7 100%);box-shadow:inset 1px 1px 0 rgba(255,255,255,.8);"></div>
<svg style="left:405px;top:770px" width="16" height="16" viewBox="0 0 16 16"><path d="M0.5 3l3.2 2.6L0.500 8.200z" fill="#3b7fe0"/><rect x="5" y="2.600" width="10.4" height="3" fill="#fdfdff" stroke="#6a78a8" stroke-width=".9"/><rect x="5" y="7.200" width="10.4" height="6.400" fill="#fdfdff" stroke="#6a78a8" stroke-width=".9" stroke-dasharray="1.6 1"/><path d="M7 10.4h6.400" stroke="#6a78a8" stroke-width="1" stroke-dasharray="1.6 1"/></svg>
<div class="t" style="left:426px;top:768px;height:20px;line-height:20px;color:#16213a;letter-spacing:-0.25px;">Czynności</div>
<div style="left:484px;top:765px;width:82px;height:25px;border:1px solid #98a4bc;border-bottom:none;border-radius:3px 3px 0 0;box-sizing:border-box;background:linear-gradient(#eff2f7 0,#e4e8f0 42%,#d8deea 56%,#d3dae7 100%);box-shadow:inset 1px 1px 0 rgba(255,255,255,.8);"></div>
<svg style="left:493px;top:770px" width="16" height="16" viewBox="0 0 16 16"><rect x="0.6" y="0.6" width="14.8" height="14.8" rx="1" fill="#fdfdff" stroke="#4868b8" stroke-width="1.2"/><circle cx="4.600" cy="11.4" r="1.7" fill="#58a838" stroke="#2c6c18" stroke-width=".5"/><circle cx="11.4" cy="4.600" r="1.7" fill="#e8a028" stroke="#9c6410" stroke-width=".5"/><path d="M4.600 9.400V4.600h4.800" fill="none" stroke="#4a4a4a" stroke-width=".9"/></svg>
<div class="t" style="left:514px;top:768px;height:20px;line-height:20px;color:#16213a;letter-spacing:-0.1px;">Operacje</div>
<div style="left:567px;top:765px;width:94px;height:25px;border:1px solid #98a4bc;border-bottom:none;border-radius:3px 3px 0 0;box-sizing:border-box;background:linear-gradient(#eff2f7 0,#e4e8f0 42%,#d8deea 56%,#d3dae7 100%);box-shadow:inset 1px 1px 0 rgba(255,255,255,.8);"></div>
<svg style="left:576px;top:770px" width="16" height="16" viewBox="0 0 16 16"><rect x="0" y="0" width="16" height="16" fill="#c8c8c8" opacity=".5"/><path d="M3.400 1.400h11.200l-1.400 13.200H1.400z" fill="#f0f2f6" stroke="#5a5a5a" stroke-width=".9"/><path d="M5 4.600h7.600M4.600 7.600h7.600M4.200 10.600h5.200" stroke="#c42828" stroke-width="1.2"/><path d="M3.400 1.400L1.200 4.200l2 .6z" fill="#3a3a3a"/><circle cx="11.600" cy="11.400" r="1.400" fill="#c42828"/></svg>
<div class="t" style="left:597px;top:768px;height:20px;line-height:20px;color:#16213a;letter-spacing:-0.1px;">Dokumenty</div>
<svg style="left:211px;top:801px" width="16" height="16" viewBox="0 0 16 16"><path d="M5.5 0.7h5v4.8h4.8v5h-4.8v4.8h-5v-4.8H0.7v-5h4.8z" fill="url(#gPlus)" stroke="#2a63cc" stroke-width="1.2" stroke-linejoin="round"/><path d="M6.6 5.6V1.9h2.8M1.9 9.4V6.6h3.7" fill="none" stroke="#b4d6fb" stroke-width=".9"/></svg>
<svg style="left:214px;top:829px" width="14" height="4" viewBox="0 0 14 4"><ellipse cx="6" cy="4.500" rx="5" ry="4" fill="#fdfdfd" stroke="#c4c8d0"/></svg>
<svg style="left:1368px;top:801px" width="16" height="15" viewBox="0 0 16 15"><g stroke="#f4f7fb" stroke-width="2.800" stroke-linecap="round"><path d="M7 2.500h8M7 7.500h8M7 12.500h8"/></g><g stroke="#1e2744" stroke-width="1.200"><path d="M6.500 2.500h9M6.500 7.500h9M6.500 12.500h9"/></g><g fill="#d8ecfd" stroke="#2f6fd0" stroke-width=".9"><circle cx="2.500" cy="2.500" r="1.900"/><circle cx="2.500" cy="7.500" r="1.900"/><circle cx="2.500" cy="12.500" r="1.900"/></g></svg>
<div style="left:235px;top:795px;width:1107px;height:21px;background:linear-gradient(#e9ecf2 0,#e1e5ed 48%,#d4dae6 52%,#d7dde8 100%);"></div>
<svg style="left:237px;top:802px" width="8" height="8" viewBox="0 0 8 8"><path d="M4 0.300v7.400M0.300 4h7.400M1.400 1.400l5.200 5.200M6.600 1.400L1.400 6.600" stroke="#1a1f30" stroke-width=".75"/></svg>
<div class="t13" style="left:249px;top:796px;height:21px;line-height:21px;color:#3a4868;letter-spacing:-0.2px;">Lp</div>
<div class="t13" style="left:323px;top:796px;height:21px;line-height:21px;color:#3a4868;letter-spacing:-0.17px;">Nazwa etapu</div>
<div class="t13" style="left:423px;top:796px;height:21px;line-height:21px;color:#3a4868;letter-spacing:-0.17px;">Status</div>
<div class="t13" style="left:513px;top:796px;height:21px;line-height:21px;color:#3a4868;letter-spacing:-0.22px;">Postęp etapu</div>
<div class="t13" style="left:613px;top:796px;height:21px;line-height:21px;color:#3a4868;letter-spacing:-0.29px;">Użytkownik</div>
<div class="t13" style="left:713px;top:796px;height:21px;line-height:21px;color:#3a4868;letter-spacing:-0.13px;">Gniazdo</div>
<div class="t13" style="left:813px;top:796px;height:21px;line-height:21px;color:#3a4868;letter-spacing:-0.5px;">Maszyna</div>
<div class="t13" style="left:913px;top:796px;height:21px;line-height:21px;color:#3a4868;letter-spacing:-0.28px;">Narzędzie</div>
<div class="t13" style="left:1013px;top:796px;height:21px;line-height:21px;color:#3a4868;letter-spacing:-0.2px;">Rozpoczni...</div>
<div class="t13" style="left:1087px;top:796px;height:21px;line-height:21px;color:#3a4868;letter-spacing:-0.16px;">Zakończ auto...</div>
<div class="t13" style="left:1187px;top:796px;height:21px;line-height:21px;color:#3a4868;letter-spacing:0.03px;">Rejestruj czas...</div>
<div class="t13" style="left:1287px;top:796px;height:21px;line-height:21px;color:#3a4868;width:55px;overflow:hidden;letter-spacing:-0.2px;">Edycja ilo</div>
<svg style="left:305px;top:803px" width="9" height="5" viewBox="0 0 9 5"><path d="M0 5h9L4.5 0z" fill="#9aa4b8"/></svg>
<div style="left:246px;top:795px;width:1px;height:21px;background:rgba(255,255,255,.55);"></div>
<div style="left:245px;top:795px;width:1px;height:21px;background:rgba(150,160,185,.22);"></div>
<div style="left:320px;top:795px;width:1px;height:21px;background:rgba(255,255,255,.55);"></div>
<div style="left:319px;top:795px;width:1px;height:21px;background:rgba(150,160,185,.22);"></div>
<div style="left:420px;top:795px;width:1px;height:21px;background:rgba(255,255,255,.55);"></div>
<div style="left:419px;top:795px;width:1px;height:21px;background:rgba(150,160,185,.22);"></div>
<div style="left:510px;top:795px;width:1px;height:21px;background:rgba(255,255,255,.55);"></div>
<div style="left:509px;top:795px;width:1px;height:21px;background:rgba(150,160,185,.22);"></div>
<div style="left:610px;top:795px;width:1px;height:21px;background:rgba(255,255,255,.55);"></div>
<div style="left:609px;top:795px;width:1px;height:21px;background:rgba(150,160,185,.22);"></div>
<div style="left:710px;top:795px;width:1px;height:21px;background:rgba(255,255,255,.55);"></div>
<div style="left:709px;top:795px;width:1px;height:21px;background:rgba(150,160,185,.22);"></div>
<div style="left:810px;top:795px;width:1px;height:21px;background:rgba(255,255,255,.55);"></div>
<div style="left:809px;top:795px;width:1px;height:21px;background:rgba(150,160,185,.22);"></div>
<div style="left:910px;top:795px;width:1px;height:21px;background:rgba(255,255,255,.55);"></div>
<div style="left:909px;top:795px;width:1px;height:21px;background:rgba(150,160,185,.22);"></div>
<div style="left:1010px;top:795px;width:1px;height:21px;background:rgba(255,255,255,.55);"></div>
<div style="left:1009px;top:795px;width:1px;height:21px;background:rgba(150,160,185,.22);"></div>
<div style="left:1084px;top:795px;width:1px;height:21px;background:rgba(255,255,255,.55);"></div>
<div style="left:1083px;top:795px;width:1px;height:21px;background:rgba(150,160,185,.22);"></div>
<div style="left:1184px;top:795px;width:1px;height:21px;background:rgba(255,255,255,.55);"></div>
<div style="left:1183px;top:795px;width:1px;height:21px;background:rgba(150,160,185,.22);"></div>
<div style="left:1284px;top:795px;width:1px;height:21px;background:rgba(255,255,255,.55);"></div>
<div style="left:1283px;top:795px;width:1px;height:21px;background:rgba(150,160,185,.22);"></div>
<div style="left:235px;top:816px;width:1107px;height:16px;background:linear-gradient(#dcdee2 0,#e8e9ec 40%,#ecedef 100%);"></div>
<div style="left:253px;top:817px;width:762px;height:14px;box-sizing:border-box;border:1px solid #a6abba;border-radius:3px;background:linear-gradient(#f6f7fa 0,#e4e7ef 45%,#cfd5e2 52%,#d2d8e4 100%);box-shadow:inset 0 0 0 1px rgba(255,255,255,.7);"></div>
<svg style="left:241px;top:820px" width="4" height="7" viewBox="0 0 4 7"><path d="M4 0v7L0 3.5z" fill="#9aa0ae"/></svg>
<svg style="left:1332px;top:820px" width="4" height="7" viewBox="0 0 4 7"><path d="M0 0v7l4-3.5z" fill="#9aa0ae"/></svg>
<div style="left:631px;top:821px;width:1px;height:6px;background:#5d6880;"></div>
<div style="left:634px;top:821px;width:1px;height:6px;background:#5d6880;"></div>
<div style="left:637px;top:821px;width:1px;height:6px;background:#5d6880;"></div>
<div style="left:1343px;top:795px;width:16px;height:21px;background:linear-gradient(90deg,#dcdee2 0,#e8e9ec 40%,#ecedef 100%);"></div>
<svg style="left:1347px;top:798px" width="7" height="4" viewBox="0 0 7 4"><path d="M0 4h7L3.5 0z" fill="#9aa0ae"/></svg>
<svg style="left:1347px;top:808px" width="7" height="4" viewBox="0 0 7 4"><path d="M0 0h7L3.5 4z" fill="#9aa0ae"/></svg>
</body></html>
